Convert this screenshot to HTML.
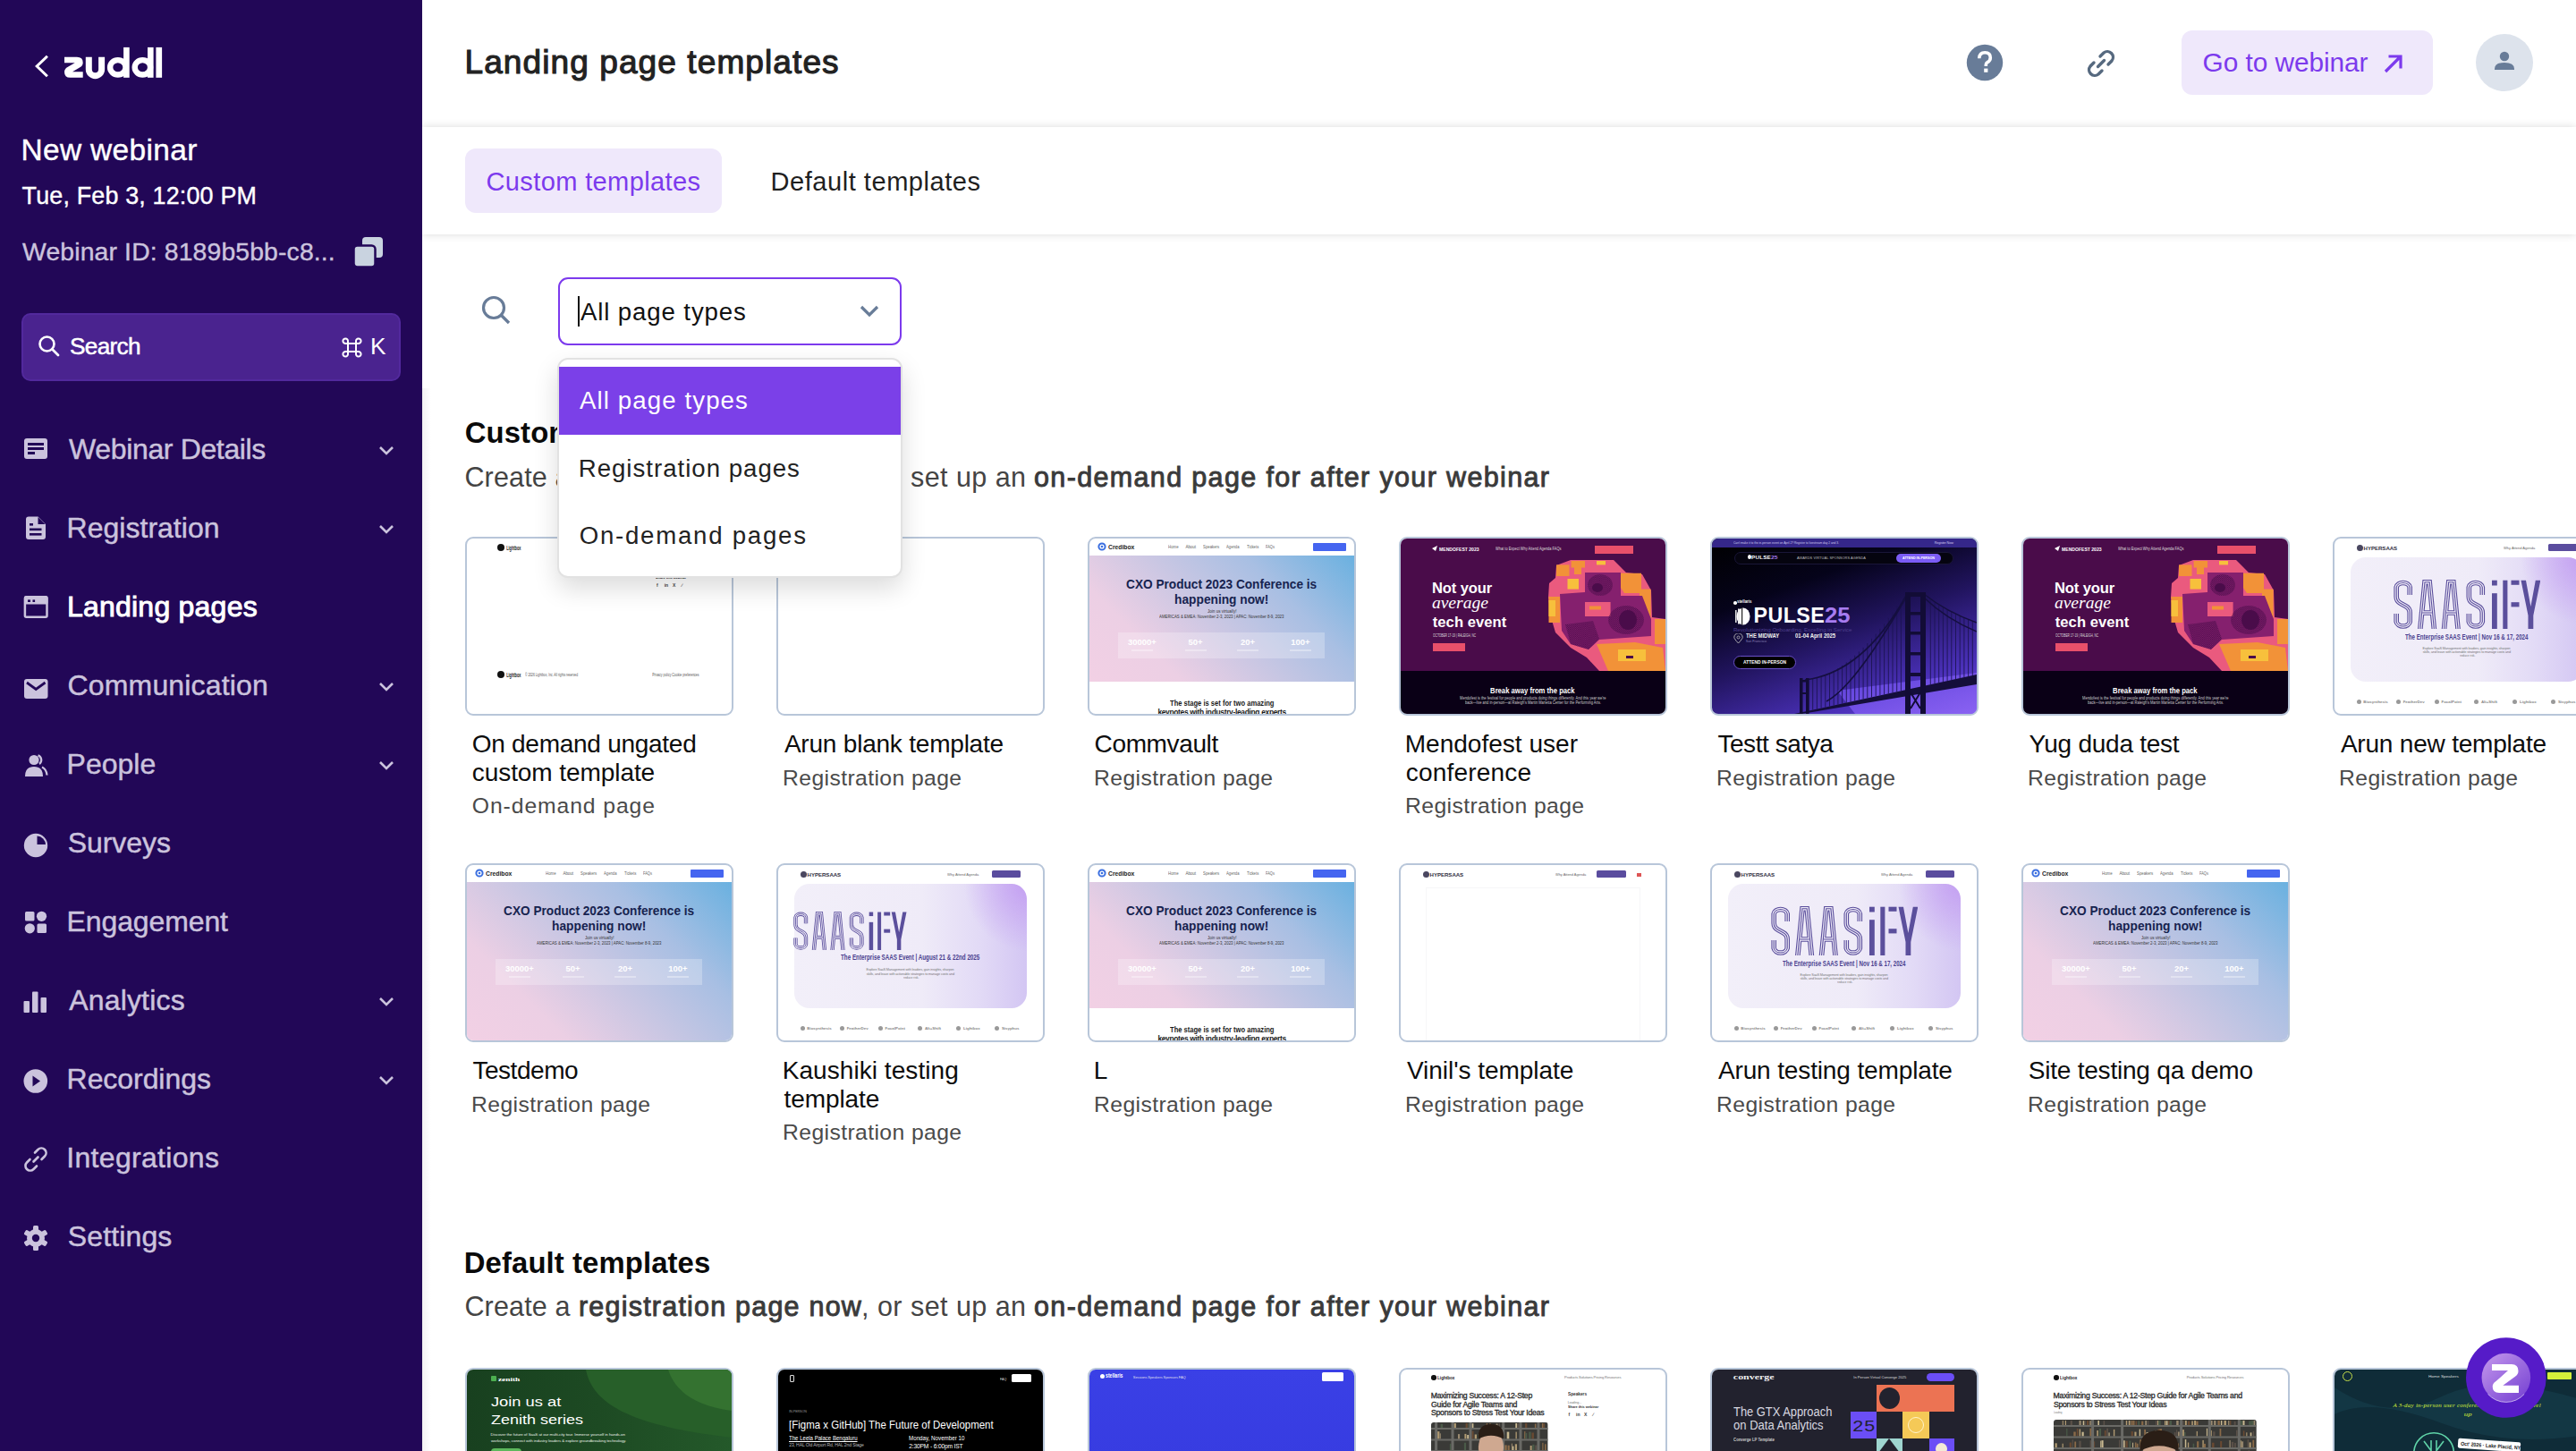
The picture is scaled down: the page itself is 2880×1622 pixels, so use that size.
<!DOCTYPE html><html><head><meta charset="utf-8"><style>
html,body{margin:0;padding:0;width:2880px;height:1622px;overflow:hidden;background:#fff;}
body{position:relative;font-family:"Liberation Sans",sans-serif;}
.a{position:absolute;box-sizing:border-box;}
.t{position:absolute;white-space:nowrap;}
.th{position:absolute;box-sizing:border-box;border:2px solid #b8c6d9;border-radius:9px;overflow:hidden;background:#fff;}
.th .a,.th .t{position:absolute;}
</style></head><body>
<div class="a" style="left:472px;top:142px;width:2408px;height:120px;background:#fff;box-shadow:0 0 9px rgba(0,0,0,0.15);"></div>
<div class="a" style="left:472px;top:434px;width:10px;height:1188px;background:linear-gradient(to right,rgba(0,0,0,0.05),rgba(0,0,0,0));"></div>
<div class="a" style="left:0px;top:0px;width:472px;height:1622px;background:#220757;"></div>
<svg class="a" style="left:36px;top:58px;" width="22" height="32" viewBox="0 0 22 32"><path d="M15.8 5.8 L5.2 16 L15.8 26.2" fill="none" stroke="#fff" stroke-width="3" stroke-linecap="square"/></svg>
<svg class="a" style="left:70px;top:50px;" width="115" height="40" viewBox="0 0 115 40"><path d="M2 13.8 H16 Q22.7 13.8 22.7 20 Q22.7 23.5 19 25.5 L11 30.3 H22.7 V36.8 H8.5 Q2 36.8 2 30.5 Q2 27 5.5 25 L13.7 20.3 H2 Z" fill="#fff"/><path d="M29.3 13.8 V27.5 A7.15 7.15 0 0 0 43.6 27.5 V13.8" fill="none" stroke="#fff" stroke-width="7"/><ellipse cx="61.8" cy="25.3" rx="8.7" ry="8.2" fill="none" stroke="#fff" stroke-width="6.4"/><rect x="68.1" y="2.9" width="6.6" height="33.9" fill="#fff"/><ellipse cx="89.4" cy="25.3" rx="8.7" ry="8.2" fill="none" stroke="#fff" stroke-width="6.4"/><rect x="95" y="2.9" width="6.6" height="33.9" fill="#fff"/><rect x="104.4" y="2.9" width="6.7" height="33.9" fill="#fff"/></svg>
<div class="t" style="left:23.5px;top:150.7px;font-size:33.43px;line-height:33.43px;letter-spacing:0.366px;color:#fff;-webkit-text-stroke:0.40px #fff;">New webinar</div>
<div class="t" style="left:24.6px;top:206.2px;font-size:26.89px;line-height:26.89px;letter-spacing:0.176px;color:#fff;-webkit-text-stroke:0.40px #fff;">Tue, Feb 3, 12:00 PM</div>
<div class="t" style="left:25.1px;top:267.0px;font-size:28.34px;line-height:28.34px;letter-spacing:0.148px;color:#cbc3dd;-webkit-text-stroke:0.40px #cbc3dd;">Webinar ID: 8189b5bb-c8...</div>
<svg class="a" style="left:394px;top:264px;" width="36" height="36" viewBox="0 0 36 36"><rect x="11" y="1" width="23" height="23" rx="4" fill="#c9d3e0"/><rect x="1.5" y="10.5" width="24" height="24" rx="4" fill="#c9d3e0" stroke="#220757" stroke-width="2.5"/></svg>
<div class="a" style="left:24px;top:350px;width:424px;height:76px;background:#4a238f;border:2px solid #52299d;border-radius:10px;"></div>
<svg class="a" style="left:42px;top:374px;" width="26" height="26" viewBox="0 0 26 26"><circle cx="10.5" cy="10.5" r="8" fill="none" stroke="#fff" stroke-width="2.6"/><path d="M16.5 16.5 L23 23" stroke="#fff" stroke-width="2.8" stroke-linecap="round"/></svg>
<div class="t" style="left:78.1px;top:373.9px;font-size:26.16px;line-height:26.16px;letter-spacing:-0.702px;color:#fff;-webkit-text-stroke:0.50px #fff;">Search</div>
<svg class="a" style="left:381px;top:376px;" width="25" height="25" viewBox="0 0 25 25"><g fill="none" stroke="#fff" stroke-width="2"><path d="M8 8 H17 V17 H8 Z"/><path d="M8 8 V5.5 A2.8 2.8 0 1 0 5.5 8 Z"/><path d="M17 8 V5.5 A2.8 2.8 0 1 1 19.5 8 Z"/><path d="M8 17 V19.5 A2.8 2.8 0 1 1 5.5 17 Z"/><path d="M17 17 V19.5 A2.8 2.8 0 1 0 19.5 17 Z"/></g></svg>
<div class="t" style="left:413.9px;top:373.9px;font-size:26.16px;line-height:26.16px;letter-spacing:-2.010px;color:#fff;">K</div>
<div class="t" style="left:77.1px;top:485.9px;font-size:31.98px;line-height:31.98px;letter-spacing:-0.346px;color:#cbc3dd;-webkit-text-stroke:0.45px #cbc3dd;">Webinar Details</div>
<svg class="a" style="left:422px;top:497px;" width="20" height="14" viewBox="0 0 20 14"><path d="M3 3 L10 10 L17 3" fill="none" stroke="#cbc3dd" stroke-width="2.6"/></svg>
<div class="t" style="left:74.6px;top:573.9px;font-size:31.98px;line-height:31.98px;letter-spacing:0.029px;color:#cbc3dd;-webkit-text-stroke:0.45px #cbc3dd;">Registration</div>
<svg class="a" style="left:422px;top:585px;" width="20" height="14" viewBox="0 0 20 14"><path d="M3 3 L10 10 L17 3" fill="none" stroke="#cbc3dd" stroke-width="2.6"/></svg>
<div class="t" style="left:74.9px;top:661.9px;font-size:31.98px;line-height:31.98px;letter-spacing:0.250px;color:#fff;-webkit-text-stroke:0.96px #fff;">Landing pages</div>
<div class="t" style="left:75.6px;top:749.9px;font-size:31.98px;line-height:31.98px;letter-spacing:0.175px;color:#cbc3dd;-webkit-text-stroke:0.45px #cbc3dd;">Communication</div>
<svg class="a" style="left:422px;top:761px;" width="20" height="14" viewBox="0 0 20 14"><path d="M3 3 L10 10 L17 3" fill="none" stroke="#cbc3dd" stroke-width="2.6"/></svg>
<div class="t" style="left:74.6px;top:837.9px;font-size:31.98px;line-height:31.98px;letter-spacing:0.005px;color:#cbc3dd;-webkit-text-stroke:0.45px #cbc3dd;">People</div>
<svg class="a" style="left:422px;top:849px;" width="20" height="14" viewBox="0 0 20 14"><path d="M3 3 L10 10 L17 3" fill="none" stroke="#cbc3dd" stroke-width="2.6"/></svg>
<div class="t" style="left:75.8px;top:925.9px;font-size:31.98px;line-height:31.98px;letter-spacing:-0.059px;color:#cbc3dd;-webkit-text-stroke:0.45px #cbc3dd;">Surveys</div>
<div class="t" style="left:74.6px;top:1013.9px;font-size:31.98px;line-height:31.98px;letter-spacing:-0.103px;color:#cbc3dd;-webkit-text-stroke:0.45px #cbc3dd;">Engagement</div>
<div class="t" style="left:77.2px;top:1101.9px;font-size:31.98px;line-height:31.98px;letter-spacing:0.189px;color:#cbc3dd;-webkit-text-stroke:0.45px #cbc3dd;">Analytics</div>
<svg class="a" style="left:422px;top:1113px;" width="20" height="14" viewBox="0 0 20 14"><path d="M3 3 L10 10 L17 3" fill="none" stroke="#cbc3dd" stroke-width="2.6"/></svg>
<div class="t" style="left:74.6px;top:1189.9px;font-size:31.98px;line-height:31.98px;letter-spacing:-0.046px;color:#cbc3dd;-webkit-text-stroke:0.45px #cbc3dd;">Recordings</div>
<svg class="a" style="left:422px;top:1201px;" width="20" height="14" viewBox="0 0 20 14"><path d="M3 3 L10 10 L17 3" fill="none" stroke="#cbc3dd" stroke-width="2.6"/></svg>
<div class="t" style="left:74.3px;top:1277.9px;font-size:31.98px;line-height:31.98px;letter-spacing:0.324px;color:#cbc3dd;-webkit-text-stroke:0.45px #cbc3dd;">Integrations</div>
<div class="t" style="left:75.8px;top:1365.9px;font-size:31.98px;line-height:31.98px;letter-spacing:0.145px;color:#cbc3dd;-webkit-text-stroke:0.45px #cbc3dd;">Settings</div>
<svg class="a" style="left:25px;top:488px;" width="30" height="30" viewBox="0 0 30 30"><rect x="2" y="2" width="26" height="23" rx="3" fill="#cbc3dd"/><rect x="6" y="7" width="18" height="3" fill="#220757"/><rect x="6" y="12" width="18" height="3" fill="#220757"/><rect x="6" y="17" width="8" height="3" fill="#220757"/></svg>
<svg class="a" style="left:25px;top:576px;" width="30" height="30" viewBox="0 0 30 30"><path d="M6 1.5 H17.5 L26 10 V24 A3 3 0 0 1 23 27 H7 A3 3 0 0 1 4 24 V4.5 A3 3 0 0 1 7 1.5 Z" fill="#cbc3dd"/><path d="M17.5 2 V10 H25.5 Z" fill="#220757"/><rect x="8" y="9" width="4" height="2.6" fill="#220757"/><rect x="8" y="14.5" width="13.5" height="2.6" fill="#220757"/><rect x="8" y="20" width="13.5" height="2.6" fill="#220757"/></svg>
<svg class="a" style="left:25px;top:666px;" width="30" height="30" viewBox="0 0 30 30"><rect x="2.9" y="1.2" width="24.6" height="22.6" rx="1.5" fill="none" stroke="#cbc3dd" stroke-width="2.5"/><rect x="2" y="0.5" width="26.5" height="9" rx="1.5" fill="#cbc3dd"/><rect x="6" y="4.4" width="3" height="2.6" fill="#220757"/><rect x="11.5" y="4.4" width="2.6" height="2.6" fill="#220757"/></svg>
<svg class="a" style="left:25px;top:755px;" width="30" height="30" viewBox="0 0 30 30"><rect x="2" y="4" width="26.5" height="22" rx="3" fill="#cbc3dd"/><path d="M5 8 L15.2 15.5 L25.5 8" fill="none" stroke="#220757" stroke-width="2.8"/></svg>
<svg class="a" style="left:26px;top:842px;" width="30" height="30" viewBox="0 0 30 30"><circle cx="12" cy="7.5" r="5.6" fill="#cbc3dd"/><path d="M2 26 Q2 15 12 15 Q22 15 22 26 Z" fill="#cbc3dd"/><path d="M16.5 2.3 A5.6 5.6 0 0 1 18 12" fill="none" stroke="#cbc3dd" stroke-width="2.3"/><path d="M21 15.5 Q26 18 26.5 24.5" fill="none" stroke="#cbc3dd" stroke-width="2.3"/></svg>
<svg class="a" style="left:25px;top:930px;" width="30" height="30" viewBox="0 0 30 30"><circle cx="15" cy="15" r="13.2" fill="#cbc3dd"/><path d="M16.5 4.5 A10 10 0 0 1 26 14 H16.5 Z" fill="#220757"/></svg>
<svg class="a" style="left:25px;top:1017px;" width="30" height="30" viewBox="0 0 30 30"><rect x="3" y="2" width="10.5" height="10.5" rx="1.5" fill="#cbc3dd"/><circle cx="21.5" cy="7.3" r="5.6" fill="#cbc3dd"/><circle cx="8.3" cy="20.8" r="5.6" fill="#cbc3dd"/><rect x="16.5" y="15.5" width="10.5" height="10.5" rx="1.5" fill="#cbc3dd"/></svg>
<svg class="a" style="left:25px;top:1107px;" width="30" height="30" viewBox="0 0 30 30"><rect x="1.5" y="12" width="6.5" height="13" rx="1" fill="#cbc3dd"/><rect x="11" y="1.5" width="6.5" height="23.5" rx="1" fill="#cbc3dd"/><rect x="20.5" y="8" width="6.5" height="17" rx="1" fill="#cbc3dd"/></svg>
<svg class="a" style="left:25px;top:1194px;" width="30" height="30" viewBox="0 0 30 30"><circle cx="14.8" cy="14.5" r="13.3" fill="#cbc3dd"/><path d="M11.5 8.5 L20 14.5 L11.5 20.5 Z" fill="#220757"/></svg>
<svg class="a" style="left:25px;top:1281px;" width="30" height="30" viewBox="0 0 30 30"><path d="M12.5 17.5 L17.5 12.5" stroke="#cbc3dd" stroke-width="2.6" stroke-linecap="round"/><path d="M14 7.5 L17.5 4 A5.3 5.3 0 0 1 25 11.5 L21.5 15" fill="none" stroke="#cbc3dd" stroke-width="2.6" stroke-linecap="round"/><path d="M16 22.5 L12.5 26 A5.3 5.3 0 0 1 5 18.5 L8.5 15" fill="none" stroke="#cbc3dd" stroke-width="2.6" stroke-linecap="round"/></svg>
<svg class="a" style="left:25px;top:1369px;" width="30" height="30" viewBox="0 0 30 30"><rect x="12" y="1" width="6" height="8" rx="1.5" fill="#cbc3dd" transform="rotate(0 15 15)"/><rect x="12" y="1" width="6" height="8" rx="1.5" fill="#cbc3dd" transform="rotate(60 15 15)"/><rect x="12" y="1" width="6" height="8" rx="1.5" fill="#cbc3dd" transform="rotate(120 15 15)"/><rect x="12" y="1" width="6" height="8" rx="1.5" fill="#cbc3dd" transform="rotate(180 15 15)"/><rect x="12" y="1" width="6" height="8" rx="1.5" fill="#cbc3dd" transform="rotate(240 15 15)"/><rect x="12" y="1" width="6" height="8" rx="1.5" fill="#cbc3dd" transform="rotate(300 15 15)"/><circle cx="15" cy="15" r="10" fill="#cbc3dd"/><circle cx="15" cy="15" r="4.2" fill="#220757"/></svg>
<div class="t" style="left:519.5px;top:50.6px;font-size:37.06px;line-height:37.06px;letter-spacing:1.077px;color:#222;-webkit-text-stroke:1.11px #222;">Landing page templates</div>
<svg class="a" style="left:2198px;top:49px;" width="42" height="42" viewBox="0 0 42 42"><circle cx="21" cy="21" r="20.2" fill="#687c98"/><path d="M14.8 16.2 Q15 9.8 21.2 9.8 Q27.3 9.8 27.3 15.5 Q27.3 19 23.6 20.8 Q22.3 21.5 22.3 23.5 V25" fill="none" stroke="#fff" stroke-width="3.6"/><rect x="20.2" y="27.6" width="4.2" height="4.2" fill="#fff"/></svg>
<svg class="a" style="left:2328px;top:50px;" width="42" height="42" viewBox="0 0 42 42"><g fill="none" stroke="#56697f" stroke-width="3.4" stroke-linecap="round"><path d="M17.5 24.5 L24.5 17.5"/><path d="M20 13 L24 9 A6.4 6.4 0 0 1 33 18 L29 22"/><path d="M22 29 L18 33 A6.4 6.4 0 0 1 9 24 L13 20"/></g></svg>
<div class="a" style="left:2439px;top:34px;width:281px;height:72px;background:#efe8fb;border-radius:12px;"></div>
<div class="t" style="left:2462.5px;top:54.8px;font-size:29.80px;line-height:29.80px;letter-spacing:-0.042px;color:#7c3aed;">Go to webinar</div>
<svg class="a" style="left:2662px;top:58px;" width="28" height="26" viewBox="0 0 28 26"><path d="M5 22 L22 5 M8.5 5 H22 V18.5" fill="none" stroke="#7c3aed" stroke-width="3.2"/></svg>
<div class="a" style="left:2768px;top:38px;width:64px;height:64px;background:#dde3ec;border-radius:50%;"></div>
<svg class="a" style="left:2782px;top:52px;" width="36" height="36" viewBox="0 0 36 36"><circle cx="18" cy="11" r="5.2" fill="#687c98"/><path d="M7 25 Q7 18 18 18 Q29 18 29 25 V26 H7 Z" fill="#687c98"/></svg>
<div class="a" style="left:520px;top:166px;width:287px;height:72px;background:#efe8fb;border-radius:12px;"></div>
<div class="t" style="left:543.5px;top:189.4px;font-size:29.07px;line-height:29.07px;letter-spacing:0.351px;color:#7c3aed;">Custom templates</div>
<div class="t" style="left:861.6px;top:189.4px;font-size:29.07px;line-height:29.07px;letter-spacing:0.514px;color:#1f1f1f;">Default templates</div>
<svg class="a" style="left:536px;top:328px;" width="38" height="38" viewBox="0 0 38 38"><circle cx="16" cy="16" r="11.5" fill="none" stroke="#687c98" stroke-width="3.2"/><path d="M24.5 24.5 L33 33" stroke="#687c98" stroke-width="3.4"/></svg>
<div class="a" style="left:624px;top:310px;width:384px;height:76px;border:2px solid #7c3aed;border-radius:11px;background:#fff;"></div>
<div class="a" style="left:646px;top:331px;width:2px;height:34px;background:#111;"></div>
<div class="t" style="left:648.9px;top:334.6px;font-size:27.62px;line-height:27.62px;letter-spacing:0.890px;color:#111;">All page types</div>
<svg class="a" style="left:958px;top:338px;" width="28" height="22" viewBox="0 0 28 22"><path d="M5 5 L14 14 L23 5" fill="none" stroke="#687c98" stroke-width="3.2"/></svg>
<div class="t" style="left:519.7px;top:468.2px;font-size:32.85px;line-height:32.85px;letter-spacing:0.123px;color:#0a0a0a;font-weight:700;">Custom templates</div>
<div class="t" style="left:519.4px;top:517.7px;font-size:30.52px;line-height:30.52px;letter-spacing:0.154px;color:#444;">Create a</div>
<div class="t" style="left:647.0px;top:517.7px;font-size:30.52px;line-height:30.52px;letter-spacing:1.204px;color:#3a3a3a;-webkit-text-stroke:0.92px #3a3a3a;">registration page now</div>
<div class="t" style="left:963.1px;top:517.7px;font-size:30.52px;line-height:30.52px;letter-spacing:0.451px;color:#444;">, or set up an</div>
<div class="t" style="left:1156.0px;top:517.7px;font-size:30.52px;line-height:30.52px;letter-spacing:1.344px;color:#3a3a3a;-webkit-text-stroke:0.92px #3a3a3a;">on-demand page for after your webinar</div>
<div class="t" style="left:518.8px;top:1396.2px;font-size:32.85px;line-height:32.85px;letter-spacing:0.108px;color:#0a0a0a;font-weight:700;">Default templates</div>
<div class="t" style="left:519.4px;top:1444.7px;font-size:30.52px;line-height:30.52px;letter-spacing:0.154px;color:#444;">Create a</div>
<div class="t" style="left:647.0px;top:1444.7px;font-size:30.52px;line-height:30.52px;letter-spacing:1.204px;color:#3a3a3a;-webkit-text-stroke:0.92px #3a3a3a;">registration page now</div>
<div class="t" style="left:963.1px;top:1444.7px;font-size:30.52px;line-height:30.52px;letter-spacing:0.451px;color:#444;">, or set up an</div>
<div class="t" style="left:1156.0px;top:1444.7px;font-size:30.52px;line-height:30.52px;letter-spacing:1.344px;color:#3a3a3a;-webkit-text-stroke:0.92px #3a3a3a;">on-demand page for after your webinar</div>
<div class="th" style="left:520px;top:600px;width:300px;height:200px;border-color:#b8c6d9;"><div class="a" style="left:34px;top:6px;width:8px;height:8px;background:#111;border-radius:50%;"></div><div class="t" style="left:43.6px;top:7.5px;font-size:6.54px;line-height:6.54px;letter-spacing:0.000px;color:#222;font-weight:700;transform:scaleX(0.5899);transform-origin:0.44px 0;">Lightbox</div><div class="t" style="left:210.8px;top:41.1px;font-size:5.81px;line-height:5.81px;letter-spacing:0.000px;color:#222;font-weight:700;transform:scaleX(0.6610);transform-origin:0.17px 0;">Share this webinar</div><div class="t" style="left:211.9px;top:50.3px;font-size:5.00px;line-height:5.00px;letter-spacing:0.000px;color:#444;font-weight:700;">f</div><div class="t" style="left:220.7px;top:50.3px;font-size:5.00px;line-height:5.00px;letter-spacing:0.000px;color:#444;font-weight:700;">in</div><div class="t" style="left:230.0px;top:50.3px;font-size:5.00px;line-height:5.00px;letter-spacing:0.000px;color:#444;font-weight:700;">X</div><div class="t" style="left:239.9px;top:50.3px;font-size:5.00px;line-height:5.00px;letter-spacing:0.000px;color:#444;font-weight:700;">∕</div><div class="a" style="left:34px;top:148px;width:8px;height:8px;background:#111;border-radius:50%;"></div><div class="t" style="left:43.6px;top:149.5px;font-size:6.54px;line-height:6.54px;letter-spacing:0.000px;color:#222;font-weight:700;transform:scaleX(0.5899);transform-origin:0.44px 0;">Lightbox</div><div class="t" style="left:64.9px;top:149.7px;font-size:5.09px;line-height:5.09px;letter-spacing:0.000px;color:#555;transform:scaleX(0.6565);transform-origin:0.08px 0;">© 2026 Lightbox, Inc. All rights reserved</div><div class="t" style="left:206.6px;top:149.7px;font-size:5.09px;line-height:5.09px;letter-spacing:0.000px;color:#555;transform:scaleX(0.6849);transform-origin:0.42px 0;">Privacy policy   Cookie preferences</div></div>
<div class="t" style="left:527.7px;top:818.3px;font-size:28.05px;line-height:28.05px;letter-spacing:-0.291px;color:#0d0d0d;">On demand ungated</div>
<div class="t" style="left:527.8px;top:849.9px;font-size:28.05px;line-height:28.05px;letter-spacing:-0.098px;color:#0d0d0d;">custom template</div>
<div class="t" style="left:527.8px;top:889.3px;font-size:24.71px;line-height:24.71px;letter-spacing:0.919px;color:#4a4a4a;">On-demand page</div>
<div class="th" style="left:868px;top:600px;width:300px;height:200px;border-color:#b8c6d9;"></div>
<div class="t" style="left:876.9px;top:818.3px;font-size:28.05px;line-height:28.05px;letter-spacing:-0.233px;color:#0d0d0d;">Arun blank template</div>
<div class="t" style="left:875.0px;top:857.7px;font-size:24.71px;line-height:24.71px;letter-spacing:0.403px;color:#4a4a4a;">Registration page</div>
<div class="th" style="left:1216px;top:600px;width:300px;height:200px;border-color:#b8c6d9;"><div class="a" style="left:0px;top:18.5px;width:296px;height:141px;background:linear-gradient(45deg,#f2d0e4 0%,#eccfe4 24%,#cbc7e3 47%,#a8bfe3 72%,#6ab1e0 100%);"></div><svg class="a" style="left:9px;top:4px" width="10" height="10" viewBox="0 0 10 10"><circle cx="5" cy="5" r="3.6" fill="none" stroke="#3b6fe0" stroke-width="2"/><circle cx="5" cy="5" r="1.3" fill="#3b6fe0"/></svg><div class="t" style="left:20.7px;top:5.7px;font-size:7.99px;line-height:7.99px;letter-spacing:0.000px;color:#222;font-weight:700;transform:scaleX(0.8465);transform-origin:0.33px 0;">Credibox</div><div class="t" style="left:88.1px;top:8.4px;font-size:4.65px;line-height:4.65px;letter-spacing:0.000px;color:#666;transform:scaleX(0.9307);transform-origin:0.38px 0;">Home</div><div class="t" style="left:107.5px;top:8.4px;font-size:4.65px;line-height:4.65px;letter-spacing:-0.153px;color:#666;">About</div><div class="t" style="left:126.6px;top:8.4px;font-size:4.65px;line-height:4.65px;letter-spacing:0.000px;color:#666;transform:scaleX(0.9237);transform-origin:0.21px 0;">Speakers</div><div class="t" style="left:152.9px;top:8.4px;font-size:4.65px;line-height:4.65px;letter-spacing:0.000px;color:#666;transform:scaleX(0.9047);transform-origin:0.01px 0;">Agenda</div><div class="t" style="left:175.7px;top:8.4px;font-size:4.65px;line-height:4.65px;letter-spacing:0.000px;color:#666;transform:scaleX(0.9130);transform-origin:0.10px 0;">Tickets</div><div class="t" style="left:196.9px;top:8.4px;font-size:4.65px;line-height:4.65px;letter-spacing:0.000px;color:#666;transform:scaleX(0.8468);transform-origin:0.38px 0;">FAQs</div><div class="a" style="left:250px;top:5px;width:37px;height:9px;background:#4565f0;border-radius:1px;"></div><div class="t" style="left:40.9px;top:44.3px;font-size:14.97px;line-height:14.97px;letter-spacing:0.000px;color:#17234f;font-weight:700;transform:scaleX(0.9116);transform-origin:0.61px 0;">CXO Product 2023 Conference is</div><div class="t" style="left:95.0px;top:61.3px;font-size:14.97px;line-height:14.97px;letter-spacing:0.000px;color:#17234f;font-weight:700;transform:scaleX(0.9173);transform-origin:1.05px 0;">happening now!</div><div class="t" style="left:131.9px;top:78.7px;font-size:5.09px;line-height:5.09px;letter-spacing:0.000px;color:#333;transform:scaleX(0.8977);transform-origin:0.08px 0;">Join us virtually!</div><div class="t" style="left:78.0px;top:85.2px;font-size:5.09px;line-height:5.09px;letter-spacing:0.000px;color:#333;transform:scaleX(0.8569);transform-origin:0.01px 0;">AMERICAS &amp; EMEA: November 2-3, 2023 | APAC: November 8-9, 2023</div><div class="a" style="left:32px;top:105px;width:231px;height:29px;background:rgba(255,255,255,0.25);"></div><div class="t" style="left:43.1px;top:111.0px;font-size:9.45px;line-height:9.45px;letter-spacing:0.000px;color:#fff;font-weight:700;">30000+</div><div class="a" style="left:47px;top:124px;width:24px;height:2px;background:rgba(255,255,255,0.35);"></div><div class="t" style="left:110.5px;top:111.0px;font-size:9.45px;line-height:9.45px;letter-spacing:0.000px;color:#fff;font-weight:700;">50+</div><div class="a" style="left:106.5px;top:124px;width:24px;height:2px;background:rgba(255,255,255,0.35);"></div><div class="t" style="left:169.0px;top:111.0px;font-size:9.45px;line-height:9.45px;letter-spacing:0.000px;color:#fff;font-weight:700;">20+</div><div class="a" style="left:165px;top:124px;width:24px;height:2px;background:rgba(255,255,255,0.35);"></div><div class="t" style="left:225.2px;top:111.0px;font-size:9.45px;line-height:9.45px;letter-spacing:0.000px;color:#fff;font-weight:700;">100+</div><div class="a" style="left:224px;top:124px;width:24px;height:2px;background:rgba(255,255,255,0.35);"></div><div class="t" style="left:89.9px;top:179.9px;font-size:8.43px;line-height:8.43px;letter-spacing:0.000px;color:#1a1a1a;font-weight:700;transform:scaleX(0.8985);transform-origin:0.09px 0;">The stage is set for two amazing</div><div class="t" style="left:76.4px;top:189.9px;font-size:8.43px;line-height:8.43px;letter-spacing:-0.326px;color:#1a1a1a;font-weight:700;">keynotes with industry-leading experts</div></div>
<div class="t" style="left:1223.6px;top:818.3px;font-size:28.05px;line-height:28.05px;letter-spacing:-0.403px;color:#0d0d0d;">Commvault</div>
<div class="t" style="left:1223.0px;top:857.7px;font-size:24.71px;line-height:24.71px;letter-spacing:0.403px;color:#4a4a4a;">Registration page</div>
<div class="th" style="left:1564px;top:600px;width:300px;height:200px;border-color:#b8c6d9;"><div class="a" style="left:0px;top:0px;width:296px;height:148px;background:#4a0c4a;"></div><div class="a" style="left:0px;top:148px;width:296px;height:48px;background:#0a0016;"></div><svg class="a" style="left:0px;top:0px" width="296" height="148" viewBox="0 0 296 148"><defs><pattern id="chk" width="2.2" height="2.2" patternUnits="userSpaceOnUse"><rect width="1.1" height="1.1" fill="#4a0c4a"/><rect x="1.1" y="1.1" width="1.1" height="1.1" fill="#4a0c4a"/></pattern></defs><path d="M190 24 L238 24 L246 32 L252 38 L270 40 L280 58 L281 88 L296 90 L296 148 L222 148 L208 133 L190 122 L173 105 L168 88 L165 66 L166 50 L173 44 L174 30 Z" fill="#ea5a7e"/><rect x="174" y="29.4" width="14.5" height="12.6" fill="#f29238"/><rect x="190.6" y="25" width="15.4" height="7.5" fill="#f29238"/><rect x="194" y="32" width="8" height="8" fill="#f29238"/><path d="M243 38.8 L269 38.8 L269 61 L250 61 L244 52 Z" fill="#f29238"/><rect x="165.5" y="65" width="12.5" height="29" fill="#f29238"/><rect x="267" y="56.6" width="12.6" height="33.4" fill="#f29238"/><path d="M219 118 L262 116 L293 122 L296 148 L232 148 Z" fill="#f29238"/><rect x="284" y="90" width="12" height="28" fill="#f29238"/><rect x="186.5" y="45" width="12.5" height="11.6" fill="#f7c03c"/><rect x="165.5" y="69" width="7.5" height="18" fill="#f7c03c"/><rect x="243" y="124" width="31" height="13" fill="#f7c03c"/><rect x="219" y="25" width="10" height="4.4" fill="#f7c03c"/><rect x="252" y="131" width="8" height="3" fill="#4a0c4a"/><path d="M178 62 L206 60 L206 38 L246 38 L246 64 L270 64 L280 90 L280 109 L222 113 L210 124 L190 118 L180 103 Z" fill="#85206e"/><rect x="206" y="71" width="28.6" height="16" fill="#ea5a7e"/><rect x="211" y="75.5" width="13" height="4" fill="#f29238"/><ellipse cx="223" cy="52" rx="14" ry="12" fill="url(#chk)"/><ellipse cx="220" cy="55" rx="6" ry="5" fill="#4a0c4a"/><ellipse cx="252" cy="91" rx="20" ry="16" fill="url(#chk)"/><ellipse cx="254" cy="91" rx="10" ry="11" fill="#4a0c4a"/><path d="M184 96 L215 92 L222 112 L210 124 L190 118 Z" fill="url(#chk)"/></svg><svg class="a" style="left:35px;top:8px" width="6" height="6" viewBox="0 0 6 6"><path d="M0 3 L6 0 L4 6 Z" fill="#fff"/></svg><div class="t" style="left:42.6px;top:8.8px;font-size:6.10px;line-height:6.10px;letter-spacing:0.000px;color:#fff;font-weight:700;transform:scaleX(0.8306);transform-origin:0.41px 0;">MENDOFEST 2023</div><div class="t" style="left:106.0px;top:10.1px;font-size:4.65px;line-height:4.65px;letter-spacing:0.000px;color:#ddd;transform:scaleX(0.8500);transform-origin:0.02px 0;">What to Expect    Why Attend    Agenda    FAQs</div><div class="a" style="left:217px;top:8px;width:43px;height:8.5px;background:#e8506a;"></div><div class="t" style="left:34.9px;top:48.0px;font-size:16.57px;line-height:16.57px;letter-spacing:-0.108px;color:#fff;font-weight:700;">Not your</div><div class="t" style="left:34.9px;top:62.4px;font-size:19.57px;line-height:19.57px;letter-spacing:0.000px;color:#fff;font-family:'Liberation Serif',serif;font-style:italic;">average</div><div class="t" style="left:35.8px;top:86.0px;font-size:16.57px;line-height:16.57px;letter-spacing:0.050px;color:#fff;font-weight:700;">tech event</div><div class="t" style="left:35.8px;top:107.1px;font-size:4.65px;line-height:4.65px;letter-spacing:0.000px;color:#ddd;transform:scaleX(0.6926);transform-origin:0.22px 0;">OCTOBER 17-19 | RALEIGH, NC</div><div class="a" style="left:36px;top:117px;width:36px;height:9px;background:#e8506a;"></div><div class="t" style="left:100.4px;top:166.2px;font-size:9.16px;line-height:9.16px;letter-spacing:0.000px;color:#fff;font-weight:700;transform:scaleX(0.8364);transform-origin:0.61px 0;">Break away from the pack</div><div class="t" style="left:65.6px;top:177.1px;font-size:4.65px;line-height:4.65px;letter-spacing:0.000px;color:#ccc;transform:scaleX(0.8664);transform-origin:0.38px 0;">Mendofest is the festival for people and products doing things differently. And this year we&#x27;re</div><div class="t" style="left:71.7px;top:182.1px;font-size:4.65px;line-height:4.65px;letter-spacing:0.000px;color:#ccc;transform:scaleX(0.8626);transform-origin:0.30px 0;">back—live and in-person—at Raleigh&#x27;s Martin Marietta Center for the Performing Arts.</div></div>
<div class="t" style="left:1570.7px;top:818.3px;font-size:28.05px;line-height:28.05px;letter-spacing:0.001px;color:#0d0d0d;">Mendofest user</div>
<div class="t" style="left:1571.8px;top:849.9px;font-size:28.05px;line-height:28.05px;letter-spacing:0.160px;color:#0d0d0d;">conference</div>
<div class="t" style="left:1571.0px;top:889.3px;font-size:24.71px;line-height:24.71px;letter-spacing:0.403px;color:#4a4a4a;">Registration page</div>
<div class="th" style="left:1912px;top:600px;width:300px;height:200px;border-color:#b8c6d9;"><div class="a" style="left:0px;top:0px;width:296px;height:196px;background:linear-gradient(160deg,#000 0%,#05031a 28%,#21145e 52%,#4a30b8 80%,#7450ea 100%);"></div><svg class="a" style="left:0px;top:0px" width="296" height="196" viewBox="0 0 296 196"><defs><linearGradient id="pbg" x1="0" y1="0" x2="1" y2="1"><stop offset="0" stop-color="#5a3fd8"/><stop offset="1" stop-color="#8a62f2"/></linearGradient></defs><path d="M140 170 L296 150 L296 196 L160 196 Z" fill="url(#pbg)"/><g fill="none" stroke="#1c1452" stroke-width="0.9"><path d="M108.0 157.8 V192.5"/><path d="M112.7 157.0 V191.5"/><path d="M117.4 155.9 V190.5"/><path d="M122.1 154.4 V189.5"/><path d="M126.8 152.5 V188.5"/><path d="M131.5 150.3 V187.5"/><path d="M136.2 147.8 V186.5"/><path d="M140.9 145.0 V185.5"/><path d="M145.6 141.9 V184.4"/><path d="M150.3 138.4 V183.4"/><path d="M155.0 134.7 V182.4"/><path d="M159.7 130.7 V181.4"/><path d="M164.4 126.4 V180.4"/><path d="M169.1 121.8 V179.4"/><path d="M173.8 117.0 V178.4"/><path d="M178.5 111.9 V177.3"/><path d="M183.2 106.6 V176.3"/><path d="M187.9 100.9 V175.3"/><path d="M192.6 95.0 V174.3"/><path d="M197.3 88.9 V173.3"/><path d="M202.0 82.5 V172.3"/><path d="M206.7 75.9 V171.3"/><path d="M211.4 69.0 V170.2"/><path d="M244.3 68.1 V163.2"/><path d="M249.0 71.5 V162.1"/><path d="M253.7 74.4 V161.1"/><path d="M258.4 77.0 V160.1"/><path d="M263.1 79.5 V159.1"/><path d="M267.8 81.8 V158.1"/><path d="M272.5 84.1 V157.1"/><path d="M277.2 86.2 V156.1"/><path d="M281.9 88.2 V155.0"/><path d="M286.6 90.2 V154.0"/><path d="M291.3 92.1 V153.0"/></g><g fill="none" stroke="#150f40" stroke-width="1.6"><path d="M218 62 Q170 150 104 158"/><path d="M218 64 Q160 165 128 182"/><path d="M237 62 Q262 82 296 94"/><path d="M237 66 Q262 90 296 104"/></g><path d="M92 196 L296 152 L296 163 L100 196 Z" fill="#140e3a"/><g fill="#120c36"><rect x="216" y="60" width="6" height="136"/><rect x="233" y="60" width="6" height="136"/><rect x="216" y="60" width="23" height="5"/><rect x="216" y="82" width="23" height="3.5"/><rect x="216" y="104" width="23" height="3.5"/><rect x="216" y="127" width="23" height="3.5"/><rect x="216" y="150" width="23" height="4"/><path d="M222 172 L233 190 M233 172 L222 190" stroke="#120c36" stroke-width="2"/><rect x="98" y="156" width="3.5" height="40"/><rect x="105" y="156" width="3.5" height="40"/><rect x="98" y="158" width="10" height="2.5"/><rect x="98" y="172" width="10" height="2"/></g></svg><div class="a" style="left:0px;top:0px;width:296px;height:10px;background:#35278a;"></div><div class="t" style="left:23.8px;top:3.8px;font-size:3.78px;line-height:3.78px;letter-spacing:0.000px;color:#cfc8ee;transform:scaleX(0.8578);transform-origin:0.19px 0;">Can&#x27;t make it to the in-person event on April 2? Register to livestream day 2 and 3.</div><div class="t" style="left:248.7px;top:3.8px;font-size:3.78px;line-height:3.78px;letter-spacing:-0.126px;color:#cfc8ee;">Register Now</div><div class="a" style="left:25px;top:14.7px;width:245px;height:14.5px;background:#05040f;border-radius:7px;border:1px solid #1a1638;"></div><div class="a" style="left:40px;top:18px;width:4px;height:5px;background:#fff;border-radius:50%;"></div><div class="t" style="left:44.1px;top:18.2px;font-size:6.25px;line-height:6.25px;letter-spacing:0.206px;color:#fff;font-weight:700;">PULSE</div><div class="t" style="left:65.8px;top:18.2px;font-size:6.25px;line-height:6.25px;letter-spacing:0.000px;color:#a77cf0;font-weight:700;transform:scaleX(1.0669);transform-origin:0.22px 0;">25</div><div class="t" style="left:95.0px;top:19.7px;font-size:3.92px;line-height:3.92px;letter-spacing:0.074px;color:#bbb;">AWARDS     VIRTUAL     SPONSORS     AGENDA</div><div class="a" style="left:206px;top:17px;width:50px;height:9.5px;background:#7b5cf5;border-radius:5px;"></div><div class="t" style="left:212.9px;top:20.0px;font-size:3.92px;line-height:3.92px;letter-spacing:0.000px;color:#fff;font-weight:700;transform:scaleX(0.9364);transform-origin:0.10px 0;">ATTEND IN-PERSON</div><div class="a" style="left:24px;top:70px;width:3.5px;height:3.5px;background:#fff;border-radius:50%;"></div><div class="t" style="left:28.3px;top:69.3px;font-size:4.94px;line-height:4.94px;letter-spacing:0.000px;color:#fff;font-weight:700;transform:scaleX(0.8741);transform-origin:0.17px 0;">stellaris</div><svg class="a" style="left:24px;top:77px" width="20" height="20" viewBox="0 0 20 20"><ellipse cx="11" cy="10" rx="7.5" ry="9.5" fill="#fff"/><rect x="2" y="3" width="1.6" height="14" fill="#ddd"/><rect x="5" y="1.5" width="2" height="17" fill="#eee"/><rect x="9" y="0.5" width="1.2" height="19" fill="#222"/></svg><div class="t" style="left:46.4px;top:75.3px;font-size:23.26px;line-height:23.26px;letter-spacing:0.482px;color:#fff;font-weight:700;">PULSE</div><div class="t" style="left:126.2px;top:75.3px;font-size:23.26px;line-height:23.26px;letter-spacing:0.000px;color:#a77cf0;font-weight:700;transform:scaleX(1.1059);transform-origin:0.81px 0;">25</div><div class="t" style="left:23.6px;top:100.1px;font-size:5.23px;line-height:5.23px;letter-spacing:0.000px;color:#4d3f8e;transform:scaleX(1.1796);transform-origin:0.43px 0;">Revolutionizing Onboarding, Excelling in Service</div><svg class="a" style="left:24px;top:106px" width="11" height="12" viewBox="0 0 11 12"><path d="M5.5 11 Q0.8 6 0.8 4.5 A4.7 4.7 0 0 1 10.2 4.5 Q10.2 6 5.5 11 Z" fill="none" stroke="#bbb" stroke-width="0.9"/><circle cx="5.5" cy="4.5" r="1.5" fill="none" stroke="#bbb" stroke-width="0.8"/></svg><div class="t" style="left:37.9px;top:106.2px;font-size:6.54px;line-height:6.54px;letter-spacing:0.000px;color:#eee;font-weight:700;transform:scaleX(0.9054);transform-origin:0.07px 0;">THE MIDWAY</div><div class="t" style="left:92.7px;top:106.2px;font-size:6.54px;line-height:6.54px;letter-spacing:0.000px;color:#eee;font-weight:700;transform:scaleX(0.9115);transform-origin:0.26px 0;">01-04 April 2025</div><div class="t" style="left:37.8px;top:113.9px;font-size:3.63px;line-height:3.63px;letter-spacing:0.008px;color:#8a80b8;">San Francisco</div><div class="a" style="left:24.3px;top:130.5px;width:70.2px;height:15.2px;background:#000;border:1.2px solid #6a50c8;border-radius:8px;"></div><div class="t" style="left:35.4px;top:136.1px;font-size:5.23px;line-height:5.23px;letter-spacing:0.000px;color:#fff;font-weight:700;transform:scaleX(0.9364);transform-origin:0.13px 0;">ATTEND IN-PERSON</div></div>
<div class="t" style="left:1920.4px;top:818.3px;font-size:28.05px;line-height:28.05px;letter-spacing:-0.456px;color:#0d0d0d;">Testt satya</div>
<div class="t" style="left:1919.0px;top:857.7px;font-size:24.71px;line-height:24.71px;letter-spacing:0.403px;color:#4a4a4a;">Registration page</div>
<div class="th" style="left:2260px;top:600px;width:300px;height:200px;border-color:#b8c6d9;"><div class="a" style="left:0px;top:0px;width:296px;height:148px;background:#4a0c4a;"></div><div class="a" style="left:0px;top:148px;width:296px;height:48px;background:#0a0016;"></div><svg class="a" style="left:0px;top:0px" width="296" height="148" viewBox="0 0 296 148"><defs><pattern id="chk" width="2.2" height="2.2" patternUnits="userSpaceOnUse"><rect width="1.1" height="1.1" fill="#4a0c4a"/><rect x="1.1" y="1.1" width="1.1" height="1.1" fill="#4a0c4a"/></pattern></defs><path d="M190 24 L238 24 L246 32 L252 38 L270 40 L280 58 L281 88 L296 90 L296 148 L222 148 L208 133 L190 122 L173 105 L168 88 L165 66 L166 50 L173 44 L174 30 Z" fill="#ea5a7e"/><rect x="174" y="29.4" width="14.5" height="12.6" fill="#f29238"/><rect x="190.6" y="25" width="15.4" height="7.5" fill="#f29238"/><rect x="194" y="32" width="8" height="8" fill="#f29238"/><path d="M243 38.8 L269 38.8 L269 61 L250 61 L244 52 Z" fill="#f29238"/><rect x="165.5" y="65" width="12.5" height="29" fill="#f29238"/><rect x="267" y="56.6" width="12.6" height="33.4" fill="#f29238"/><path d="M219 118 L262 116 L293 122 L296 148 L232 148 Z" fill="#f29238"/><rect x="284" y="90" width="12" height="28" fill="#f29238"/><rect x="186.5" y="45" width="12.5" height="11.6" fill="#f7c03c"/><rect x="165.5" y="69" width="7.5" height="18" fill="#f7c03c"/><rect x="243" y="124" width="31" height="13" fill="#f7c03c"/><rect x="219" y="25" width="10" height="4.4" fill="#f7c03c"/><rect x="252" y="131" width="8" height="3" fill="#4a0c4a"/><path d="M178 62 L206 60 L206 38 L246 38 L246 64 L270 64 L280 90 L280 109 L222 113 L210 124 L190 118 L180 103 Z" fill="#85206e"/><rect x="206" y="71" width="28.6" height="16" fill="#ea5a7e"/><rect x="211" y="75.5" width="13" height="4" fill="#f29238"/><ellipse cx="223" cy="52" rx="14" ry="12" fill="url(#chk)"/><ellipse cx="220" cy="55" rx="6" ry="5" fill="#4a0c4a"/><ellipse cx="252" cy="91" rx="20" ry="16" fill="url(#chk)"/><ellipse cx="254" cy="91" rx="10" ry="11" fill="#4a0c4a"/><path d="M184 96 L215 92 L222 112 L210 124 L190 118 Z" fill="url(#chk)"/></svg><svg class="a" style="left:35px;top:8px" width="6" height="6" viewBox="0 0 6 6"><path d="M0 3 L6 0 L4 6 Z" fill="#fff"/></svg><div class="t" style="left:42.6px;top:8.8px;font-size:6.10px;line-height:6.10px;letter-spacing:0.000px;color:#fff;font-weight:700;transform:scaleX(0.8306);transform-origin:0.41px 0;">MENDOFEST 2023</div><div class="t" style="left:106.0px;top:10.1px;font-size:4.65px;line-height:4.65px;letter-spacing:0.000px;color:#ddd;transform:scaleX(0.8500);transform-origin:0.02px 0;">What to Expect    Why Attend    Agenda    FAQs</div><div class="a" style="left:217px;top:8px;width:43px;height:8.5px;background:#e8506a;"></div><div class="t" style="left:34.9px;top:48.0px;font-size:16.57px;line-height:16.57px;letter-spacing:-0.108px;color:#fff;font-weight:700;">Not your</div><div class="t" style="left:34.9px;top:62.4px;font-size:19.57px;line-height:19.57px;letter-spacing:0.000px;color:#fff;font-family:'Liberation Serif',serif;font-style:italic;">average</div><div class="t" style="left:35.8px;top:86.0px;font-size:16.57px;line-height:16.57px;letter-spacing:0.050px;color:#fff;font-weight:700;">tech event</div><div class="t" style="left:35.8px;top:107.1px;font-size:4.65px;line-height:4.65px;letter-spacing:0.000px;color:#ddd;transform:scaleX(0.6926);transform-origin:0.22px 0;">OCTOBER 17-19 | RALEIGH, NC</div><div class="a" style="left:36px;top:117px;width:36px;height:9px;background:#e8506a;"></div><div class="t" style="left:100.4px;top:166.2px;font-size:9.16px;line-height:9.16px;letter-spacing:0.000px;color:#fff;font-weight:700;transform:scaleX(0.8364);transform-origin:0.61px 0;">Break away from the pack</div><div class="t" style="left:65.6px;top:177.1px;font-size:4.65px;line-height:4.65px;letter-spacing:0.000px;color:#ccc;transform:scaleX(0.8664);transform-origin:0.38px 0;">Mendofest is the festival for people and products doing things differently. And this year we&#x27;re</div><div class="t" style="left:71.7px;top:182.1px;font-size:4.65px;line-height:4.65px;letter-spacing:0.000px;color:#ccc;transform:scaleX(0.8626);transform-origin:0.30px 0;">back—live and in-person—at Raleigh&#x27;s Martin Marietta Center for the Performing Arts.</div></div>
<div class="t" style="left:2268.4px;top:818.3px;font-size:28.05px;line-height:28.05px;letter-spacing:-0.275px;color:#0d0d0d;">Yug duda test</div>
<div class="t" style="left:2267.0px;top:857.7px;font-size:24.71px;line-height:24.71px;letter-spacing:0.403px;color:#4a4a4a;">Registration page</div>
<div class="th" style="left:2608px;top:600px;width:300px;height:200px;border-color:#b8c6d9;"><div class="a" style="left:17.8px;top:20.5px;width:260.5px;height:139.5px;background:radial-gradient(ellipse 70px 75px at 100% 0%,rgba(196,160,242,1) 0%,rgba(196,160,242,0) 100%),linear-gradient(90deg,#f2eff9 0%,#efebf8 55%,#e2daf6 80%,#d3c6f3 100%);border-radius:17px;"></div><div class="a" style="left:24.6px;top:6.7px;width:7.2px;height:7.3px;background:#4a4760;border-radius:50%;"></div><div class="t" style="left:32.6px;top:8.0px;font-size:6.10px;line-height:6.10px;letter-spacing:-0.043px;color:#2f2d40;font-weight:700;">HYPERSAAS</div><div class="t" style="left:189.0px;top:8.8px;font-size:4.36px;line-height:4.36px;letter-spacing:0.000px;color:#666;transform:scaleX(0.9172);transform-origin:0.02px 0;">Why Attend     Agenda</div><div class="a" style="left:238.5px;top:6px;width:32.5px;height:8.4px;background:#5a4c9e;border-radius:1.5px;"></div><svg class="a" style="left:65.5px;top:45.8px" width="164.3" height="55.7" viewBox="0 0 164.3 55.7" preserveAspectRatio="none"><g transform="translate(0 0)" fill="none" stroke-linejoin="miter"><path d="M18.2 17 V8.5 A7.6 6 0 0 0 3.2 8.5 V19 Q3.2 24 8 26.5 L13.5 29.5 Q18.2 32 18.2 37 V47 A7.6 6 0 0 1 3.2 47 V38" stroke="#5b4f9c" stroke-width="5.6"/><path d="M18.2 17 V8.5 A7.6 6 0 0 0 3.2 8.5 V19 Q3.2 24 8 26.5 L13.5 29.5 Q18.2 32 18.2 37 V47 A7.6 6 0 0 1 3.2 47 V38" stroke="#efebf8" stroke-width="3.4"/><path d="M18.2 17 V8.5 A7.6 6 0 0 0 3.2 8.5 V19 Q3.2 24 8 26.5 L13.5 29.5 Q18.2 32 18.2 37 V47 A7.6 6 0 0 1 3.2 47 V38" stroke="#5b4f9c" stroke-width="1.1"/></g><g transform="translate(26.8 0)" fill="none" stroke-linejoin="miter"><path d="M3 55.7 L8.2 2.8 H13.4 L18.6 55.7 M5.6 37 H16" stroke="#5b4f9c" stroke-width="5.6"/><path d="M3 55.7 L8.2 2.8 H13.4 L18.6 55.7 M5.6 37 H16" stroke="#efebf8" stroke-width="3.4"/><path d="M3 55.7 L8.2 2.8 H13.4 L18.6 55.7 M5.6 37 H16" stroke="#5b4f9c" stroke-width="1.1"/></g><g transform="translate(53.5 0)" fill="none" stroke-linejoin="miter"><path d="M3 55.7 L8.2 2.8 H13.4 L18.6 55.7 M5.6 37 H16" stroke="#5b4f9c" stroke-width="5.6"/><path d="M3 55.7 L8.2 2.8 H13.4 L18.6 55.7 M5.6 37 H16" stroke="#efebf8" stroke-width="3.4"/><path d="M3 55.7 L8.2 2.8 H13.4 L18.6 55.7 M5.6 37 H16" stroke="#5b4f9c" stroke-width="1.1"/></g><g transform="translate(81.1 0)" fill="none" stroke-linejoin="miter"><path d="M18.2 17 V8.5 A7.6 6 0 0 0 3.2 8.5 V19 Q3.2 24 8 26.5 L13.5 29.5 Q18.2 32 18.2 37 V47 A7.6 6 0 0 1 3.2 47 V38" stroke="#5b4f9c" stroke-width="5.6"/><path d="M18.2 17 V8.5 A7.6 6 0 0 0 3.2 8.5 V19 Q3.2 24 8 26.5 L13.5 29.5 Q18.2 32 18.2 37 V47 A7.6 6 0 0 1 3.2 47 V38" stroke="#efebf8" stroke-width="3.4"/><path d="M18.2 17 V8.5 A7.6 6 0 0 0 3.2 8.5 V19 Q3.2 24 8 26.5 L13.5 29.5 Q18.2 32 18.2 37 V47 A7.6 6 0 0 1 3.2 47 V38" stroke="#5b4f9c" stroke-width="1.1"/></g><g fill="#5b4f9c"><rect x="110" y="0.7" width="5.8" height="5.8"/><rect x="110" y="15.2" width="5.8" height="40.5"/><rect x="122.3" y="0.7" width="5.1" height="55"/><rect x="131.5" y="0.7" width="9" height="5.1"/><rect x="131.5" y="25.2" width="9" height="5.2"/><path d="M142.5 0.7 H148 L153.4 30 L158.8 0.7 H164.3 L156.3 40 V55.7 H150.5 V40 Z"/></g></svg><div class="t" style="left:79.2px;top:105.0px;font-size:9.59px;line-height:9.59px;letter-spacing:0.000px;color:#4a3f8f;font-weight:700;transform:scaleX(0.6420);transform-origin:0.11px 0;">The Enterprise SAAS Event | Nov 16 &amp; 17, 2024</div><div class="t" style="left:98.5px;top:121.8px;font-size:3.78px;line-height:3.78px;letter-spacing:-0.131px;color:#777;">Explore SaaS Management with leaders, gain insights, sharpen</div><div class="t" style="left:98.7px;top:126.1px;font-size:3.78px;line-height:3.78px;letter-spacing:-0.120px;color:#777;">skills, and leave with actionable strategies to manage costs and</div><div class="t" style="left:139.7px;top:130.3px;font-size:3.78px;line-height:3.78px;letter-spacing:0.000px;color:#777;transform:scaleX(0.8978);transform-origin:0.25px 0;">reduce risk.</div><div class="a" style="left:24.6px;top:179.5px;width:5px;height:5px;background:#999;border-radius:50%;"></div><div class="t" style="left:32.3px;top:180.8px;font-size:4.40px;line-height:4.40px;letter-spacing:0.000px;color:#888;font-weight:700;">Biosynthesis</div><div class="a" style="left:69px;top:179.5px;width:5px;height:5px;background:#999;border-radius:50%;"></div><div class="t" style="left:76.7px;top:180.8px;font-size:4.40px;line-height:4.40px;letter-spacing:0.000px;color:#888;font-weight:700;">FeatherDev</div><div class="a" style="left:111.8px;top:179.5px;width:5px;height:5px;background:#999;border-radius:50%;"></div><div class="t" style="left:119.5px;top:180.8px;font-size:4.40px;line-height:4.40px;letter-spacing:0.000px;color:#888;font-weight:700;">FocalPoint</div><div class="a" style="left:156px;top:179.5px;width:5px;height:5px;background:#999;border-radius:50%;"></div><div class="t" style="left:163.9px;top:180.8px;font-size:4.40px;line-height:4.40px;letter-spacing:0.000px;color:#888;font-weight:700;">Alt+Shift</div><div class="a" style="left:199.4px;top:179.5px;width:5px;height:5px;background:#999;border-radius:50%;"></div><div class="t" style="left:207.1px;top:180.8px;font-size:4.40px;line-height:4.40px;letter-spacing:0.000px;color:#888;font-weight:700;">Lightbox</div><div class="a" style="left:242px;top:179.5px;width:5px;height:5px;background:#999;border-radius:50%;"></div><div class="t" style="left:249.9px;top:180.8px;font-size:4.40px;line-height:4.40px;letter-spacing:0.000px;color:#888;font-weight:700;">Sisyphus</div></div>
<div class="t" style="left:2616.9px;top:818.3px;font-size:28.05px;line-height:28.05px;letter-spacing:-0.225px;color:#0d0d0d;">Arun new template</div>
<div class="t" style="left:2615.0px;top:857.7px;font-size:24.71px;line-height:24.71px;letter-spacing:0.403px;color:#4a4a4a;">Registration page</div>
<div class="th" style="left:520px;top:965px;width:300px;height:200px;border-color:#b8c6d9;"><div class="a" style="left:0px;top:18.5px;width:296px;height:178px;background:linear-gradient(45deg,#f2d0e4 0%,#eccfe4 24%,#cbc7e3 47%,#a8bfe3 72%,#6ab1e0 100%);"></div><svg class="a" style="left:9px;top:4px" width="10" height="10" viewBox="0 0 10 10"><circle cx="5" cy="5" r="3.6" fill="none" stroke="#3b6fe0" stroke-width="2"/><circle cx="5" cy="5" r="1.3" fill="#3b6fe0"/></svg><div class="t" style="left:20.7px;top:5.7px;font-size:7.99px;line-height:7.99px;letter-spacing:0.000px;color:#222;font-weight:700;transform:scaleX(0.8465);transform-origin:0.33px 0;">Credibox</div><div class="t" style="left:88.1px;top:8.4px;font-size:4.65px;line-height:4.65px;letter-spacing:0.000px;color:#666;transform:scaleX(0.9307);transform-origin:0.38px 0;">Home</div><div class="t" style="left:107.5px;top:8.4px;font-size:4.65px;line-height:4.65px;letter-spacing:-0.153px;color:#666;">About</div><div class="t" style="left:126.6px;top:8.4px;font-size:4.65px;line-height:4.65px;letter-spacing:0.000px;color:#666;transform:scaleX(0.9237);transform-origin:0.21px 0;">Speakers</div><div class="t" style="left:152.9px;top:8.4px;font-size:4.65px;line-height:4.65px;letter-spacing:0.000px;color:#666;transform:scaleX(0.9047);transform-origin:0.01px 0;">Agenda</div><div class="t" style="left:175.7px;top:8.4px;font-size:4.65px;line-height:4.65px;letter-spacing:0.000px;color:#666;transform:scaleX(0.9130);transform-origin:0.10px 0;">Tickets</div><div class="t" style="left:196.9px;top:8.4px;font-size:4.65px;line-height:4.65px;letter-spacing:0.000px;color:#666;transform:scaleX(0.8468);transform-origin:0.38px 0;">FAQs</div><div class="a" style="left:250px;top:5px;width:37px;height:9px;background:#4565f0;border-radius:1px;"></div><div class="t" style="left:40.9px;top:44.3px;font-size:14.97px;line-height:14.97px;letter-spacing:0.000px;color:#17234f;font-weight:700;transform:scaleX(0.9116);transform-origin:0.61px 0;">CXO Product 2023 Conference is</div><div class="t" style="left:95.0px;top:61.3px;font-size:14.97px;line-height:14.97px;letter-spacing:0.000px;color:#17234f;font-weight:700;transform:scaleX(0.9173);transform-origin:1.05px 0;">happening now!</div><div class="t" style="left:131.9px;top:78.7px;font-size:5.09px;line-height:5.09px;letter-spacing:0.000px;color:#333;transform:scaleX(0.8977);transform-origin:0.08px 0;">Join us virtually!</div><div class="t" style="left:78.0px;top:85.2px;font-size:5.09px;line-height:5.09px;letter-spacing:0.000px;color:#333;transform:scaleX(0.8569);transform-origin:0.01px 0;">AMERICAS &amp; EMEA: November 2-3, 2023 | APAC: November 8-9, 2023</div><div class="a" style="left:32px;top:105px;width:231px;height:29px;background:rgba(255,255,255,0.25);"></div><div class="t" style="left:43.1px;top:111.0px;font-size:9.45px;line-height:9.45px;letter-spacing:0.000px;color:#fff;font-weight:700;">30000+</div><div class="a" style="left:47px;top:124px;width:24px;height:2px;background:rgba(255,255,255,0.35);"></div><div class="t" style="left:110.5px;top:111.0px;font-size:9.45px;line-height:9.45px;letter-spacing:0.000px;color:#fff;font-weight:700;">50+</div><div class="a" style="left:106.5px;top:124px;width:24px;height:2px;background:rgba(255,255,255,0.35);"></div><div class="t" style="left:169.0px;top:111.0px;font-size:9.45px;line-height:9.45px;letter-spacing:0.000px;color:#fff;font-weight:700;">20+</div><div class="a" style="left:165px;top:124px;width:24px;height:2px;background:rgba(255,255,255,0.35);"></div><div class="t" style="left:225.2px;top:111.0px;font-size:9.45px;line-height:9.45px;letter-spacing:0.000px;color:#fff;font-weight:700;">100+</div><div class="a" style="left:224px;top:124px;width:24px;height:2px;background:rgba(255,255,255,0.35);"></div></div>
<div class="t" style="left:528.4px;top:1183.3px;font-size:28.05px;line-height:28.05px;letter-spacing:-0.474px;color:#0d0d0d;">Testdemo</div>
<div class="t" style="left:527.0px;top:1222.7px;font-size:24.71px;line-height:24.71px;letter-spacing:0.403px;color:#4a4a4a;">Registration page</div>
<div class="th" style="left:868px;top:965px;width:300px;height:200px;border-color:#b8c6d9;"><div class="a" style="left:17.8px;top:20.5px;width:260.5px;height:139.5px;background:radial-gradient(ellipse 70px 75px at 100% 0%,rgba(196,160,242,1) 0%,rgba(196,160,242,0) 100%),linear-gradient(90deg,#f2eff9 0%,#efebf8 55%,#e2daf6 80%,#d3c6f3 100%);border-radius:17px;"></div><div class="a" style="left:24.6px;top:6.7px;width:7.2px;height:7.3px;background:#4a4760;border-radius:50%;"></div><div class="t" style="left:32.6px;top:8.0px;font-size:6.10px;line-height:6.10px;letter-spacing:-0.043px;color:#2f2d40;font-weight:700;">HYPERSAAS</div><div class="t" style="left:189.0px;top:8.8px;font-size:4.36px;line-height:4.36px;letter-spacing:0.000px;color:#666;transform:scaleX(0.9172);transform-origin:0.02px 0;">Why Attend     Agenda</div><div class="a" style="left:238.5px;top:6px;width:32.5px;height:8.4px;background:#5a4c9e;border-radius:1.5px;"></div><svg class="a" style="left:17px;top:51.6px" width="126.5" height="43.4" viewBox="0 0 164.3 55.7" preserveAspectRatio="none"><g transform="translate(0 0)" fill="none" stroke-linejoin="miter"><path d="M18.2 17 V8.5 A7.6 6 0 0 0 3.2 8.5 V19 Q3.2 24 8 26.5 L13.5 29.5 Q18.2 32 18.2 37 V47 A7.6 6 0 0 1 3.2 47 V38" stroke="#5b4f9c" stroke-width="5.6"/><path d="M18.2 17 V8.5 A7.6 6 0 0 0 3.2 8.5 V19 Q3.2 24 8 26.5 L13.5 29.5 Q18.2 32 18.2 37 V47 A7.6 6 0 0 1 3.2 47 V38" stroke="#efebf8" stroke-width="3.4"/><path d="M18.2 17 V8.5 A7.6 6 0 0 0 3.2 8.5 V19 Q3.2 24 8 26.5 L13.5 29.5 Q18.2 32 18.2 37 V47 A7.6 6 0 0 1 3.2 47 V38" stroke="#5b4f9c" stroke-width="1.1"/></g><g transform="translate(26.8 0)" fill="none" stroke-linejoin="miter"><path d="M3 55.7 L8.2 2.8 H13.4 L18.6 55.7 M5.6 37 H16" stroke="#5b4f9c" stroke-width="5.6"/><path d="M3 55.7 L8.2 2.8 H13.4 L18.6 55.7 M5.6 37 H16" stroke="#efebf8" stroke-width="3.4"/><path d="M3 55.7 L8.2 2.8 H13.4 L18.6 55.7 M5.6 37 H16" stroke="#5b4f9c" stroke-width="1.1"/></g><g transform="translate(53.5 0)" fill="none" stroke-linejoin="miter"><path d="M3 55.7 L8.2 2.8 H13.4 L18.6 55.7 M5.6 37 H16" stroke="#5b4f9c" stroke-width="5.6"/><path d="M3 55.7 L8.2 2.8 H13.4 L18.6 55.7 M5.6 37 H16" stroke="#efebf8" stroke-width="3.4"/><path d="M3 55.7 L8.2 2.8 H13.4 L18.6 55.7 M5.6 37 H16" stroke="#5b4f9c" stroke-width="1.1"/></g><g transform="translate(81.1 0)" fill="none" stroke-linejoin="miter"><path d="M18.2 17 V8.5 A7.6 6 0 0 0 3.2 8.5 V19 Q3.2 24 8 26.5 L13.5 29.5 Q18.2 32 18.2 37 V47 A7.6 6 0 0 1 3.2 47 V38" stroke="#5b4f9c" stroke-width="5.6"/><path d="M18.2 17 V8.5 A7.6 6 0 0 0 3.2 8.5 V19 Q3.2 24 8 26.5 L13.5 29.5 Q18.2 32 18.2 37 V47 A7.6 6 0 0 1 3.2 47 V38" stroke="#efebf8" stroke-width="3.4"/><path d="M18.2 17 V8.5 A7.6 6 0 0 0 3.2 8.5 V19 Q3.2 24 8 26.5 L13.5 29.5 Q18.2 32 18.2 37 V47 A7.6 6 0 0 1 3.2 47 V38" stroke="#5b4f9c" stroke-width="1.1"/></g><g fill="#5b4f9c"><rect x="110" y="0.7" width="5.8" height="5.8"/><rect x="110" y="15.2" width="5.8" height="40.5"/><rect x="122.3" y="0.7" width="5.1" height="55"/><rect x="131.5" y="0.7" width="9" height="5.1"/><rect x="131.5" y="25.2" width="9" height="5.2"/><path d="M142.5 0.7 H148 L153.4 30 L158.8 0.7 H164.3 L156.3 40 V55.7 H150.5 V40 Z"/></g></svg><div class="t" style="left:69.9px;top:97.9px;font-size:9.59px;line-height:9.59px;letter-spacing:0.000px;color:#4a3f8f;font-weight:700;transform:scaleX(0.6535);transform-origin:0.11px 0;">The Enterprise SAAS Event | August 21 &amp; 22nd 2025</div><div class="t" style="left:98.5px;top:116.3px;font-size:3.78px;line-height:3.78px;letter-spacing:-0.131px;color:#777;">Explore SaaS Management with leaders, gain insights, sharpen</div><div class="t" style="left:98.7px;top:120.6px;font-size:3.78px;line-height:3.78px;letter-spacing:-0.120px;color:#777;">skills, and leave with actionable strategies to manage costs and</div><div class="t" style="left:139.7px;top:124.8px;font-size:3.78px;line-height:3.78px;letter-spacing:0.000px;color:#777;transform:scaleX(0.8978);transform-origin:0.25px 0;">reduce risk.</div><div class="a" style="left:24.6px;top:179.5px;width:5px;height:5px;background:#999;border-radius:50%;"></div><div class="t" style="left:32.3px;top:180.8px;font-size:4.40px;line-height:4.40px;letter-spacing:0.000px;color:#888;font-weight:700;">Biosynthesis</div><div class="a" style="left:69px;top:179.5px;width:5px;height:5px;background:#999;border-radius:50%;"></div><div class="t" style="left:76.7px;top:180.8px;font-size:4.40px;line-height:4.40px;letter-spacing:0.000px;color:#888;font-weight:700;">FeatherDev</div><div class="a" style="left:111.8px;top:179.5px;width:5px;height:5px;background:#999;border-radius:50%;"></div><div class="t" style="left:119.5px;top:180.8px;font-size:4.40px;line-height:4.40px;letter-spacing:0.000px;color:#888;font-weight:700;">FocalPoint</div><div class="a" style="left:156px;top:179.5px;width:5px;height:5px;background:#999;border-radius:50%;"></div><div class="t" style="left:163.9px;top:180.8px;font-size:4.40px;line-height:4.40px;letter-spacing:0.000px;color:#888;font-weight:700;">Alt+Shift</div><div class="a" style="left:199.4px;top:179.5px;width:5px;height:5px;background:#999;border-radius:50%;"></div><div class="t" style="left:207.1px;top:180.8px;font-size:4.40px;line-height:4.40px;letter-spacing:0.000px;color:#888;font-weight:700;">Lightbox</div><div class="a" style="left:242px;top:179.5px;width:5px;height:5px;background:#999;border-radius:50%;"></div><div class="t" style="left:249.9px;top:180.8px;font-size:4.40px;line-height:4.40px;letter-spacing:0.000px;color:#888;font-weight:700;">Sisyphus</div></div>
<div class="t" style="left:874.7px;top:1183.3px;font-size:28.05px;line-height:28.05px;letter-spacing:0.042px;color:#0d0d0d;">Kaushiki testing</div>
<div class="t" style="left:876.6px;top:1214.9px;font-size:28.05px;line-height:28.05px;letter-spacing:-0.132px;color:#0d0d0d;">template</div>
<div class="t" style="left:875.0px;top:1254.3px;font-size:24.71px;line-height:24.71px;letter-spacing:0.403px;color:#4a4a4a;">Registration page</div>
<div class="th" style="left:1216px;top:965px;width:300px;height:200px;border-color:#b8c6d9;"><div class="a" style="left:0px;top:18.5px;width:296px;height:141px;background:linear-gradient(45deg,#f2d0e4 0%,#eccfe4 24%,#cbc7e3 47%,#a8bfe3 72%,#6ab1e0 100%);"></div><svg class="a" style="left:9px;top:4px" width="10" height="10" viewBox="0 0 10 10"><circle cx="5" cy="5" r="3.6" fill="none" stroke="#3b6fe0" stroke-width="2"/><circle cx="5" cy="5" r="1.3" fill="#3b6fe0"/></svg><div class="t" style="left:20.7px;top:5.7px;font-size:7.99px;line-height:7.99px;letter-spacing:0.000px;color:#222;font-weight:700;transform:scaleX(0.8465);transform-origin:0.33px 0;">Credibox</div><div class="t" style="left:88.1px;top:8.4px;font-size:4.65px;line-height:4.65px;letter-spacing:0.000px;color:#666;transform:scaleX(0.9307);transform-origin:0.38px 0;">Home</div><div class="t" style="left:107.5px;top:8.4px;font-size:4.65px;line-height:4.65px;letter-spacing:-0.153px;color:#666;">About</div><div class="t" style="left:126.6px;top:8.4px;font-size:4.65px;line-height:4.65px;letter-spacing:0.000px;color:#666;transform:scaleX(0.9237);transform-origin:0.21px 0;">Speakers</div><div class="t" style="left:152.9px;top:8.4px;font-size:4.65px;line-height:4.65px;letter-spacing:0.000px;color:#666;transform:scaleX(0.9047);transform-origin:0.01px 0;">Agenda</div><div class="t" style="left:175.7px;top:8.4px;font-size:4.65px;line-height:4.65px;letter-spacing:0.000px;color:#666;transform:scaleX(0.9130);transform-origin:0.10px 0;">Tickets</div><div class="t" style="left:196.9px;top:8.4px;font-size:4.65px;line-height:4.65px;letter-spacing:0.000px;color:#666;transform:scaleX(0.8468);transform-origin:0.38px 0;">FAQs</div><div class="a" style="left:250px;top:5px;width:37px;height:9px;background:#4565f0;border-radius:1px;"></div><div class="t" style="left:40.9px;top:44.3px;font-size:14.97px;line-height:14.97px;letter-spacing:0.000px;color:#17234f;font-weight:700;transform:scaleX(0.9116);transform-origin:0.61px 0;">CXO Product 2023 Conference is</div><div class="t" style="left:95.0px;top:61.3px;font-size:14.97px;line-height:14.97px;letter-spacing:0.000px;color:#17234f;font-weight:700;transform:scaleX(0.9173);transform-origin:1.05px 0;">happening now!</div><div class="t" style="left:131.9px;top:78.7px;font-size:5.09px;line-height:5.09px;letter-spacing:0.000px;color:#333;transform:scaleX(0.8977);transform-origin:0.08px 0;">Join us virtually!</div><div class="t" style="left:78.0px;top:85.2px;font-size:5.09px;line-height:5.09px;letter-spacing:0.000px;color:#333;transform:scaleX(0.8569);transform-origin:0.01px 0;">AMERICAS &amp; EMEA: November 2-3, 2023 | APAC: November 8-9, 2023</div><div class="a" style="left:32px;top:105px;width:231px;height:29px;background:rgba(255,255,255,0.25);"></div><div class="t" style="left:43.1px;top:111.0px;font-size:9.45px;line-height:9.45px;letter-spacing:0.000px;color:#fff;font-weight:700;">30000+</div><div class="a" style="left:47px;top:124px;width:24px;height:2px;background:rgba(255,255,255,0.35);"></div><div class="t" style="left:110.5px;top:111.0px;font-size:9.45px;line-height:9.45px;letter-spacing:0.000px;color:#fff;font-weight:700;">50+</div><div class="a" style="left:106.5px;top:124px;width:24px;height:2px;background:rgba(255,255,255,0.35);"></div><div class="t" style="left:169.0px;top:111.0px;font-size:9.45px;line-height:9.45px;letter-spacing:0.000px;color:#fff;font-weight:700;">20+</div><div class="a" style="left:165px;top:124px;width:24px;height:2px;background:rgba(255,255,255,0.35);"></div><div class="t" style="left:225.2px;top:111.0px;font-size:9.45px;line-height:9.45px;letter-spacing:0.000px;color:#fff;font-weight:700;">100+</div><div class="a" style="left:224px;top:124px;width:24px;height:2px;background:rgba(255,255,255,0.35);"></div><div class="t" style="left:89.9px;top:179.9px;font-size:8.43px;line-height:8.43px;letter-spacing:0.000px;color:#1a1a1a;font-weight:700;transform:scaleX(0.8985);transform-origin:0.09px 0;">The stage is set for two amazing</div><div class="t" style="left:76.4px;top:189.9px;font-size:8.43px;line-height:8.43px;letter-spacing:-0.326px;color:#1a1a1a;font-weight:700;">keynotes with industry-leading experts</div></div>
<div class="t" style="left:1222.7px;top:1183.3px;font-size:28.05px;line-height:28.05px;letter-spacing:0.931px;color:#0d0d0d;">L</div>
<div class="t" style="left:1223.0px;top:1222.7px;font-size:24.71px;line-height:24.71px;letter-spacing:0.403px;color:#4a4a4a;">Registration page</div>
<div class="th" style="left:1564px;top:965px;width:300px;height:200px;border-color:#b8c6d9;"><div class="a" style="left:27.7px;top:24.6px;width:240.3px;height:180px;border:1px solid #f6f6f8;"></div><div class="a" style="left:24.6px;top:6.7px;width:7.2px;height:7.3px;background:#4a4760;border-radius:50%;"></div><div class="t" style="left:32.6px;top:8.0px;font-size:6.10px;line-height:6.10px;letter-spacing:-0.043px;color:#2f2d40;font-weight:700;">HYPERSAAS</div><div class="t" style="left:173.0px;top:8.8px;font-size:4.36px;line-height:4.36px;letter-spacing:0.000px;color:#666;transform:scaleX(0.8943);transform-origin:0.02px 0;">Why Attend     Agenda</div><div class="a" style="left:218.6px;top:6px;width:33px;height:8.4px;background:#5a4c9e;border-radius:1.5px;"></div><div class="a" style="left:264px;top:8.5px;width:5px;height:4px;background:#d55;"></div></div>
<div class="t" style="left:1572.9px;top:1183.3px;font-size:28.05px;line-height:28.05px;letter-spacing:-0.047px;color:#0d0d0d;">Vinil&#x27;s template</div>
<div class="t" style="left:1571.0px;top:1222.7px;font-size:24.71px;line-height:24.71px;letter-spacing:0.403px;color:#4a4a4a;">Registration page</div>
<div class="th" style="left:1912px;top:965px;width:300px;height:200px;border-color:#b8c6d9;"><div class="a" style="left:17.8px;top:20.5px;width:260.5px;height:139.5px;background:radial-gradient(ellipse 70px 75px at 100% 0%,rgba(196,160,242,1) 0%,rgba(196,160,242,0) 100%),linear-gradient(90deg,#f2eff9 0%,#efebf8 55%,#e2daf6 80%,#d3c6f3 100%);border-radius:17px;"></div><div class="a" style="left:24.6px;top:6.7px;width:7.2px;height:7.3px;background:#4a4760;border-radius:50%;"></div><div class="t" style="left:32.6px;top:8.0px;font-size:6.10px;line-height:6.10px;letter-spacing:-0.043px;color:#2f2d40;font-weight:700;">HYPERSAAS</div><div class="t" style="left:189.0px;top:8.8px;font-size:4.36px;line-height:4.36px;letter-spacing:0.000px;color:#666;transform:scaleX(0.9172);transform-origin:0.02px 0;">Why Attend     Agenda</div><div class="a" style="left:238.5px;top:6px;width:32.5px;height:8.4px;background:#5a4c9e;border-radius:1.5px;"></div><svg class="a" style="left:65.5px;top:45.8px" width="164.3" height="55.7" viewBox="0 0 164.3 55.7" preserveAspectRatio="none"><g transform="translate(0 0)" fill="none" stroke-linejoin="miter"><path d="M18.2 17 V8.5 A7.6 6 0 0 0 3.2 8.5 V19 Q3.2 24 8 26.5 L13.5 29.5 Q18.2 32 18.2 37 V47 A7.6 6 0 0 1 3.2 47 V38" stroke="#5b4f9c" stroke-width="5.6"/><path d="M18.2 17 V8.5 A7.6 6 0 0 0 3.2 8.5 V19 Q3.2 24 8 26.5 L13.5 29.5 Q18.2 32 18.2 37 V47 A7.6 6 0 0 1 3.2 47 V38" stroke="#efebf8" stroke-width="3.4"/><path d="M18.2 17 V8.5 A7.6 6 0 0 0 3.2 8.5 V19 Q3.2 24 8 26.5 L13.5 29.5 Q18.2 32 18.2 37 V47 A7.6 6 0 0 1 3.2 47 V38" stroke="#5b4f9c" stroke-width="1.1"/></g><g transform="translate(26.8 0)" fill="none" stroke-linejoin="miter"><path d="M3 55.7 L8.2 2.8 H13.4 L18.6 55.7 M5.6 37 H16" stroke="#5b4f9c" stroke-width="5.6"/><path d="M3 55.7 L8.2 2.8 H13.4 L18.6 55.7 M5.6 37 H16" stroke="#efebf8" stroke-width="3.4"/><path d="M3 55.7 L8.2 2.8 H13.4 L18.6 55.7 M5.6 37 H16" stroke="#5b4f9c" stroke-width="1.1"/></g><g transform="translate(53.5 0)" fill="none" stroke-linejoin="miter"><path d="M3 55.7 L8.2 2.8 H13.4 L18.6 55.7 M5.6 37 H16" stroke="#5b4f9c" stroke-width="5.6"/><path d="M3 55.7 L8.2 2.8 H13.4 L18.6 55.7 M5.6 37 H16" stroke="#efebf8" stroke-width="3.4"/><path d="M3 55.7 L8.2 2.8 H13.4 L18.6 55.7 M5.6 37 H16" stroke="#5b4f9c" stroke-width="1.1"/></g><g transform="translate(81.1 0)" fill="none" stroke-linejoin="miter"><path d="M18.2 17 V8.5 A7.6 6 0 0 0 3.2 8.5 V19 Q3.2 24 8 26.5 L13.5 29.5 Q18.2 32 18.2 37 V47 A7.6 6 0 0 1 3.2 47 V38" stroke="#5b4f9c" stroke-width="5.6"/><path d="M18.2 17 V8.5 A7.6 6 0 0 0 3.2 8.5 V19 Q3.2 24 8 26.5 L13.5 29.5 Q18.2 32 18.2 37 V47 A7.6 6 0 0 1 3.2 47 V38" stroke="#efebf8" stroke-width="3.4"/><path d="M18.2 17 V8.5 A7.6 6 0 0 0 3.2 8.5 V19 Q3.2 24 8 26.5 L13.5 29.5 Q18.2 32 18.2 37 V47 A7.6 6 0 0 1 3.2 47 V38" stroke="#5b4f9c" stroke-width="1.1"/></g><g fill="#5b4f9c"><rect x="110" y="0.7" width="5.8" height="5.8"/><rect x="110" y="15.2" width="5.8" height="40.5"/><rect x="122.3" y="0.7" width="5.1" height="55"/><rect x="131.5" y="0.7" width="9" height="5.1"/><rect x="131.5" y="25.2" width="9" height="5.2"/><path d="M142.5 0.7 H148 L153.4 30 L158.8 0.7 H164.3 L156.3 40 V55.7 H150.5 V40 Z"/></g></svg><div class="t" style="left:79.2px;top:105.0px;font-size:9.59px;line-height:9.59px;letter-spacing:0.000px;color:#4a3f8f;font-weight:700;transform:scaleX(0.6420);transform-origin:0.11px 0;">The Enterprise SAAS Event | Nov 16 &amp; 17, 2024</div><div class="t" style="left:98.5px;top:121.8px;font-size:3.78px;line-height:3.78px;letter-spacing:-0.131px;color:#777;">Explore SaaS Management with leaders, gain insights, sharpen</div><div class="t" style="left:98.7px;top:126.1px;font-size:3.78px;line-height:3.78px;letter-spacing:-0.120px;color:#777;">skills, and leave with actionable strategies to manage costs and</div><div class="t" style="left:139.7px;top:130.3px;font-size:3.78px;line-height:3.78px;letter-spacing:0.000px;color:#777;transform:scaleX(0.8978);transform-origin:0.25px 0;">reduce risk.</div><div class="a" style="left:24.6px;top:179.5px;width:5px;height:5px;background:#999;border-radius:50%;"></div><div class="t" style="left:32.3px;top:180.8px;font-size:4.40px;line-height:4.40px;letter-spacing:0.000px;color:#888;font-weight:700;">Biosynthesis</div><div class="a" style="left:69px;top:179.5px;width:5px;height:5px;background:#999;border-radius:50%;"></div><div class="t" style="left:76.7px;top:180.8px;font-size:4.40px;line-height:4.40px;letter-spacing:0.000px;color:#888;font-weight:700;">FeatherDev</div><div class="a" style="left:111.8px;top:179.5px;width:5px;height:5px;background:#999;border-radius:50%;"></div><div class="t" style="left:119.5px;top:180.8px;font-size:4.40px;line-height:4.40px;letter-spacing:0.000px;color:#888;font-weight:700;">FocalPoint</div><div class="a" style="left:156px;top:179.5px;width:5px;height:5px;background:#999;border-radius:50%;"></div><div class="t" style="left:163.9px;top:180.8px;font-size:4.40px;line-height:4.40px;letter-spacing:0.000px;color:#888;font-weight:700;">Alt+Shift</div><div class="a" style="left:199.4px;top:179.5px;width:5px;height:5px;background:#999;border-radius:50%;"></div><div class="t" style="left:207.1px;top:180.8px;font-size:4.40px;line-height:4.40px;letter-spacing:0.000px;color:#888;font-weight:700;">Lightbox</div><div class="a" style="left:242px;top:179.5px;width:5px;height:5px;background:#999;border-radius:50%;"></div><div class="t" style="left:249.9px;top:180.8px;font-size:4.40px;line-height:4.40px;letter-spacing:0.000px;color:#888;font-weight:700;">Sisyphus</div></div>
<div class="t" style="left:1920.9px;top:1183.3px;font-size:28.05px;line-height:28.05px;letter-spacing:-0.149px;color:#0d0d0d;">Arun testing template</div>
<div class="t" style="left:1919.0px;top:1222.7px;font-size:24.71px;line-height:24.71px;letter-spacing:0.403px;color:#4a4a4a;">Registration page</div>
<div class="th" style="left:2260px;top:965px;width:300px;height:200px;border-color:#b8c6d9;"><div class="a" style="left:0px;top:18.5px;width:296px;height:178px;background:linear-gradient(45deg,#f2d0e4 0%,#eccfe4 24%,#cbc7e3 47%,#a8bfe3 72%,#6ab1e0 100%);"></div><svg class="a" style="left:9px;top:4px" width="10" height="10" viewBox="0 0 10 10"><circle cx="5" cy="5" r="3.6" fill="none" stroke="#3b6fe0" stroke-width="2"/><circle cx="5" cy="5" r="1.3" fill="#3b6fe0"/></svg><div class="t" style="left:20.7px;top:5.7px;font-size:7.99px;line-height:7.99px;letter-spacing:0.000px;color:#222;font-weight:700;transform:scaleX(0.8465);transform-origin:0.33px 0;">Credibox</div><div class="t" style="left:88.1px;top:8.4px;font-size:4.65px;line-height:4.65px;letter-spacing:0.000px;color:#666;transform:scaleX(0.9307);transform-origin:0.38px 0;">Home</div><div class="t" style="left:107.5px;top:8.4px;font-size:4.65px;line-height:4.65px;letter-spacing:-0.153px;color:#666;">About</div><div class="t" style="left:126.6px;top:8.4px;font-size:4.65px;line-height:4.65px;letter-spacing:0.000px;color:#666;transform:scaleX(0.9237);transform-origin:0.21px 0;">Speakers</div><div class="t" style="left:152.9px;top:8.4px;font-size:4.65px;line-height:4.65px;letter-spacing:0.000px;color:#666;transform:scaleX(0.9047);transform-origin:0.01px 0;">Agenda</div><div class="t" style="left:175.7px;top:8.4px;font-size:4.65px;line-height:4.65px;letter-spacing:0.000px;color:#666;transform:scaleX(0.9130);transform-origin:0.10px 0;">Tickets</div><div class="t" style="left:196.9px;top:8.4px;font-size:4.65px;line-height:4.65px;letter-spacing:0.000px;color:#666;transform:scaleX(0.8468);transform-origin:0.38px 0;">FAQs</div><div class="a" style="left:250px;top:5px;width:37px;height:9px;background:#4565f0;border-radius:1px;"></div><div class="t" style="left:40.9px;top:44.3px;font-size:14.97px;line-height:14.97px;letter-spacing:0.000px;color:#17234f;font-weight:700;transform:scaleX(0.9116);transform-origin:0.61px 0;">CXO Product 2023 Conference is</div><div class="t" style="left:95.0px;top:61.3px;font-size:14.97px;line-height:14.97px;letter-spacing:0.000px;color:#17234f;font-weight:700;transform:scaleX(0.9173);transform-origin:1.05px 0;">happening now!</div><div class="t" style="left:131.9px;top:78.7px;font-size:5.09px;line-height:5.09px;letter-spacing:0.000px;color:#333;transform:scaleX(0.8977);transform-origin:0.08px 0;">Join us virtually!</div><div class="t" style="left:78.0px;top:85.2px;font-size:5.09px;line-height:5.09px;letter-spacing:0.000px;color:#333;transform:scaleX(0.8569);transform-origin:0.01px 0;">AMERICAS &amp; EMEA: November 2-3, 2023 | APAC: November 8-9, 2023</div><div class="a" style="left:32px;top:105px;width:231px;height:29px;background:rgba(255,255,255,0.25);"></div><div class="t" style="left:43.1px;top:111.0px;font-size:9.45px;line-height:9.45px;letter-spacing:0.000px;color:#fff;font-weight:700;">30000+</div><div class="a" style="left:47px;top:124px;width:24px;height:2px;background:rgba(255,255,255,0.35);"></div><div class="t" style="left:110.5px;top:111.0px;font-size:9.45px;line-height:9.45px;letter-spacing:0.000px;color:#fff;font-weight:700;">50+</div><div class="a" style="left:106.5px;top:124px;width:24px;height:2px;background:rgba(255,255,255,0.35);"></div><div class="t" style="left:169.0px;top:111.0px;font-size:9.45px;line-height:9.45px;letter-spacing:0.000px;color:#fff;font-weight:700;">20+</div><div class="a" style="left:165px;top:124px;width:24px;height:2px;background:rgba(255,255,255,0.35);"></div><div class="t" style="left:225.2px;top:111.0px;font-size:9.45px;line-height:9.45px;letter-spacing:0.000px;color:#fff;font-weight:700;">100+</div><div class="a" style="left:224px;top:124px;width:24px;height:2px;background:rgba(255,255,255,0.35);"></div></div>
<div class="t" style="left:2267.7px;top:1183.3px;font-size:28.05px;line-height:28.05px;letter-spacing:-0.226px;color:#0d0d0d;">Site testing qa demo</div>
<div class="t" style="left:2267.0px;top:1222.7px;font-size:24.71px;line-height:24.71px;letter-spacing:0.403px;color:#4a4a4a;">Registration page</div>
<div class="th" style="left:520px;top:1529px;width:300px;height:200px;border-color:#b8c6d9;"><div class="a" style="left:0px;top:0px;width:296px;height:196px;background:linear-gradient(90deg,#18401f 0%,#1d4a23 50%,#24592a 100%);"></div><svg class="a" style="left:0px;top:0px" width="296" height="196" viewBox="0 0 296 196"><path d="M133 0 C140 35 175 62 296 76 V0 Z" fill="#275f29"/><path d="M150 0 C160 40 200 68 296 80 L296 110 C200 95 150 60 133 0 Z" fill="rgba(0,0,0,0)"/><path d="M225 0 C232 22 252 40 296 46 V0 Z" fill="#347230"/><path d="M90 196 C150 150 220 110 296 100 V196 Z" fill="#22562a"/></svg><div class="a" style="left:27px;top:7px;width:6px;height:6px;background:#4caf50;border-radius:1px;"></div><div class="t" style="left:34.9px;top:7.5px;font-size:6.54px;line-height:6.54px;letter-spacing:0.000px;color:#fff;font-weight:700;font-family:'Liberation Serif',serif;transform:scaleX(1.4243);transform-origin:0.13px 0;">zenith</div><div class="t" style="left:26.8px;top:29.2px;font-size:14.53px;line-height:14.53px;letter-spacing:0.000px;color:#fff;transform:scaleX(1.2605);transform-origin:0.23px 0;">Join us at</div><div class="t" style="left:26.5px;top:48.7px;font-size:14.53px;line-height:14.53px;letter-spacing:0.000px;color:#fff;transform:scaleX(1.2406);transform-origin:0.46px 0;">Zenith series</div><div class="t" style="left:26.6px;top:71.3px;font-size:4.36px;line-height:4.36px;letter-spacing:-0.026px;color:#e8f0e8;">Discover the future of SaaS at our multi-city tour. Immerse yourself in hands-on</div><div class="t" style="left:27.0px;top:77.8px;font-size:4.36px;line-height:4.36px;letter-spacing:-0.036px;color:#e8f0e8;">workshops, connect with industry leaders &amp; explore groundbreaking technology.</div><div class="a" style="left:27px;top:88px;width:34px;height:12px;background:#5cb85c;border-radius:4px;"></div></div>
<div class="th" style="left:868px;top:1529px;width:300px;height:200px;border-color:#b8c6d9;"><div class="a" style="left:0px;top:0px;width:296px;height:196px;background:#000;"></div><div class="a" style="left:12.5px;top:6px;width:5px;height:8px;border:1px solid #ddd;border-radius:1px;"></div><div class="t" style="left:247.7px;top:8.6px;font-size:4.07px;line-height:4.07px;letter-spacing:0.000px;color:#ddd;transform:scaleX(0.8931);transform-origin:0.33px 0;">FAQ</div><div class="a" style="left:261px;top:4.5px;width:22px;height:9px;background:#fff;border-radius:1.5px;"></div><div class="t" style="left:12.2px;top:46.4px;font-size:3.63px;line-height:3.63px;letter-spacing:-0.070px;color:#999;">IN-PERSON</div><div class="t" style="left:11.6px;top:55.9px;font-size:12.79px;line-height:12.79px;letter-spacing:0.000px;color:#fff;transform:scaleX(0.8969);transform-origin:0.91px 0;">[Figma x GitHub] The Future of Development</div><div class="t" style="left:12.3px;top:74.3px;font-size:6.69px;line-height:6.69px;letter-spacing:0.000px;color:#fff;transform:scaleX(0.9071);transform-origin:0.15px 0;text-decoration:underline;">The Leela Palace Bengaluru</div><div class="t" style="left:12.2px;top:82.2px;font-size:5.09px;line-height:5.09px;letter-spacing:-0.135px;color:#bbb;">23, HAL Old Airport Rd, HAL 2nd Stage</div><div class="t" style="left:146.0px;top:74.3px;font-size:6.69px;line-height:6.69px;letter-spacing:0.000px;color:#fff;transform:scaleX(0.9278);transform-origin:0.55px 0;">Monday, November 10</div><div class="t" style="left:146.2px;top:83.3px;font-size:6.69px;line-height:6.69px;letter-spacing:-0.170px;color:#fff;">2:30PM - 6:00pm IST</div></div>
<div class="th" style="left:1216px;top:1529px;width:300px;height:200px;border-color:#b8c6d9;"><div class="a" style="left:0px;top:0px;width:296px;height:196px;background:linear-gradient(180deg,#3a40e6 0%,#3438dc 100%);"></div><div class="a" style="left:12px;top:4.5px;width:5px;height:5px;background:#fff;border-radius:50%;"></div><div class="t" style="left:18.3px;top:4.0px;font-size:6.54px;line-height:6.54px;letter-spacing:0.000px;color:#fff;font-weight:700;transform:scaleX(0.7842);transform-origin:0.23px 0;">stellaris</div><div class="t" style="left:48.8px;top:6.6px;font-size:4.07px;line-height:4.07px;letter-spacing:-0.118px;color:#dde;">Sessions     Speakers     Sponsors     FAQ</div><div class="a" style="left:260px;top:3px;width:24px;height:10px;background:#fff;border-radius:1.5px;"></div></div>
<div class="th" style="left:1564px;top:1529px;width:300px;height:200px;border-color:#b8c6d9;"><div class="a" style="left:34.4px;top:6.4px;width:5.6px;height:5.6px;background:#111;border-radius:50%;"></div><div class="t" style="left:40.6px;top:6.9px;font-size:5.81px;line-height:5.81px;letter-spacing:0.000px;color:#222;font-weight:700;transform:scaleX(0.7880);transform-origin:0.39px 0;">Lightbox</div><div class="t" style="left:183.1px;top:6.8px;font-size:4.07px;line-height:4.07px;letter-spacing:-0.131px;color:#777;">Products     Solutions     Pricing     Resources</div><div class="t" style="left:33.7px;top:25.1px;font-size:8.72px;line-height:8.72px;letter-spacing:-0.289px;color:#2a2a2a;-webkit-text-stroke:0.3px #2a2a2a;">Maximizing Success:  A 12-Step</div><div class="t" style="left:34.0px;top:34.7px;font-size:8.72px;line-height:8.72px;letter-spacing:-0.239px;color:#2a2a2a;-webkit-text-stroke:0.3px #2a2a2a;">Guide for Agile Teams and</div><div class="t" style="left:34.0px;top:44.3px;font-size:8.72px;line-height:8.72px;letter-spacing:-0.271px;color:#2a2a2a;-webkit-text-stroke:0.3px #2a2a2a;">Sponsors to Stress Test Your Ideas</div><div class="t" style="left:186.8px;top:24.5px;font-size:5.81px;line-height:5.81px;letter-spacing:0.000px;color:#333;font-weight:700;transform:scaleX(0.8133);transform-origin:0.17px 0;">Speakers</div><div class="t" style="left:186.7px;top:35.6px;font-size:3.63px;line-height:3.63px;letter-spacing:-0.037px;color:#777;">Loading...</div><div class="t" style="left:186.9px;top:40.3px;font-size:4.36px;line-height:4.36px;letter-spacing:0.000px;color:#333;font-weight:700;transform:scaleX(0.8813);transform-origin:0.13px 0;">Share this webinar</div><div class="t" style="left:187.4px;top:48.3px;font-size:5.00px;line-height:5.00px;letter-spacing:0.000px;color:#444;font-weight:700;">f</div><div class="t" style="left:196.0px;top:48.3px;font-size:5.00px;line-height:5.00px;letter-spacing:0.000px;color:#444;font-weight:700;">in</div><div class="t" style="left:205.1px;top:48.3px;font-size:5.00px;line-height:5.00px;letter-spacing:0.000px;color:#444;font-weight:700;">X</div><div class="t" style="left:214.8px;top:48.3px;font-size:5.00px;line-height:5.00px;letter-spacing:0.000px;color:#444;font-weight:700;">∕</div><svg class="a" style="left:34.4px;top:59px;border-radius:3px 3px 0 0" width="130.4" height="40" viewBox="0 0 130.4 40"><rect width="130.4" height="40" fill="#3a3a37"/><rect x="1.5" y="35.2" width="2.3" height="8.3" fill="#9a8a70"/><rect x="10.6" y="1.8" width="2.5" height="4.2" fill="#4a5a48"/><rect x="7.1" y="10.1" width="2.3" height="8.4" fill="#b09a72"/><rect x="9.6" y="12.3" width="1.2" height="6.2" fill="#9a8a70"/><rect x="20.9" y="23.8" width="1.5" height="7.2" fill="#4a5a48"/><rect x="7.1" y="39.4" width="1.6" height="4.1" fill="#b09a72"/><rect x="9.6" y="36.4" width="1.7" height="7.1" fill="#5a5048"/><rect x="11.4" y="37.0" width="2.1" height="6.5" fill="#6a4a32"/><rect x="15.7" y="36.8" width="1.5" height="6.7" fill="#5a5048"/><rect x="19.3" y="38.7" width="2.6" height="4.8" fill="#6a4a32"/><rect x="25.5" y="1.0" width="2.4" height="5.0" fill="#b09a72"/><rect x="38.6" y="1.0" width="2.2" height="5.0" fill="#6a4a32"/><rect x="41.4" y="1.0" width="1.1" height="5.0" fill="#4a5a48"/><rect x="30.0" y="13.1" width="2.1" height="5.4" fill="#9a8a70"/><rect x="37.4" y="12.9" width="2.0" height="5.6" fill="#b09a72"/><rect x="40.2" y="14.0" width="2.0" height="4.5" fill="#c8b890"/><rect x="36.9" y="22.7" width="2.1" height="8.3" fill="#4a5a48"/><rect x="25.5" y="39.3" width="1.7" height="4.2" fill="#8a6a48"/><rect x="32.1" y="36.3" width="2.4" height="7.2" fill="#4a5a48"/><rect x="36.3" y="36.9" width="1.6" height="6.6" fill="#6a4a32"/><rect x="45.5" y="1.2" width="1.9" height="4.8" fill="#c8b890"/><rect x="61.7" y="1.0" width="1.5" height="5.0" fill="#8a6a48"/><rect x="65.4" y="1.0" width="1.2" height="5.0" fill="#8a6a48"/><rect x="72.6" y="1.4" width="1.9" height="4.6" fill="#9a8a70"/><rect x="75.6" y="1.0" width="1.4" height="5.0" fill="#5a5048"/><rect x="45.5" y="9.6" width="2.0" height="8.9" fill="#6a4a32"/><rect x="48.7" y="13.5" width="2.3" height="5.0" fill="#b09a72"/><rect x="52.1" y="13.1" width="2.3" height="5.4" fill="#4a5a48"/><rect x="58.7" y="13.1" width="1.9" height="5.4" fill="#4a5a48"/><rect x="61.2" y="12.9" width="1.8" height="5.6" fill="#c8b890"/><rect x="67.3" y="10.2" width="1.1" height="8.3" fill="#8a6a48"/><rect x="68.6" y="14.1" width="1.8" height="4.4" fill="#6a4a32"/><rect x="71.2" y="13.5" width="1.6" height="5.0" fill="#6a4a32"/><rect x="76.4" y="14.3" width="1.6" height="4.2" fill="#b09a72"/><rect x="52.8" y="25.8" width="2.5" height="5.2" fill="#8a6a48"/><rect x="56.5" y="25.9" width="2.1" height="5.1" fill="#c8b890"/><rect x="58.9" y="23.0" width="1.0" height="8.0" fill="#5a5048"/><rect x="60.5" y="23.3" width="1.7" height="7.7" fill="#4a5a48"/><rect x="64.2" y="23.3" width="1.8" height="7.7" fill="#8a6a48"/><rect x="69.7" y="26.1" width="1.1" height="4.9" fill="#c8b890"/><rect x="70.9" y="26.4" width="2.3" height="4.6" fill="#4a5a48"/><rect x="74.4" y="23.0" width="2.1" height="8.0" fill="#6a4a32"/><rect x="48.7" y="38.6" width="1.1" height="4.9" fill="#5a5048"/><rect x="59.5" y="34.6" width="2.5" height="8.9" fill="#b09a72"/><rect x="62.9" y="36.7" width="2.2" height="6.8" fill="#9a8a70"/><rect x="71.2" y="36.9" width="1.8" height="6.6" fill="#9a8a70"/><rect x="74.0" y="35.7" width="2.2" height="7.8" fill="#6a4a32"/><rect x="94.3" y="1.0" width="1.9" height="5.0" fill="#c8b890"/><rect x="96.5" y="1.0" width="2.0" height="5.0" fill="#5a5048"/><rect x="84.7" y="10.6" width="2.6" height="7.9" fill="#c8b890"/><rect x="94.5" y="10.6" width="1.3" height="7.9" fill="#b09a72"/><rect x="82.2" y="25.4" width="2.5" height="5.6" fill="#8a6a48"/><rect x="85.6" y="25.7" width="2.2" height="5.3" fill="#8a6a48"/><rect x="89.8" y="23.6" width="1.1" height="7.4" fill="#9a8a70"/><rect x="90.9" y="26.6" width="1.5" height="4.4" fill="#c8b890"/><rect x="93.8" y="24.3" width="2.2" height="6.7" fill="#b09a72"/><rect x="84.8" y="37.7" width="2.5" height="5.8" fill="#4a5a48"/><rect x="92.5" y="36.1" width="2.3" height="7.4" fill="#6a4a32"/><rect x="96.0" y="39.2" width="1.2" height="4.3" fill="#6a4a32"/><rect x="105.1" y="1.0" width="2.2" height="5.0" fill="#6a4a32"/><rect x="115.9" y="1.5" width="1.5" height="4.5" fill="#8a6a48"/><rect x="104.2" y="10.1" width="1.2" height="8.4" fill="#8a6a48"/><rect x="105.5" y="11.9" width="1.8" height="6.6" fill="#4a5a48"/><rect x="109.2" y="10.6" width="2.5" height="7.9" fill="#4a5a48"/><rect x="112.5" y="11.5" width="2.4" height="7.0" fill="#6a4a32"/><rect x="110.7" y="26.0" width="1.9" height="5.0" fill="#b09a72"/><rect x="113.2" y="24.8" width="2.3" height="6.2" fill="#4a5a48"/><rect x="116.3" y="25.5" width="2.2" height="5.5" fill="#5a5048"/><rect x="105.3" y="35.9" width="2.1" height="7.6" fill="#b09a72"/><rect x="110.7" y="35.6" width="1.8" height="7.9" fill="#b09a72"/><rect x="117.4" y="35.0" width="1.1" height="8.5" fill="#9a8a70"/><rect x="123.9" y="1.0" width="1.6" height="5.0" fill="#8a6a48"/><rect x="125.5" y="1.0" width="1.5" height="5.0" fill="#6a4a32"/><rect x="124.3" y="22.8" width="1.2" height="8.2" fill="#8a6a48"/><rect x="127.0" y="24.3" width="1.6" height="6.7" fill="#8a6a48"/><rect x="121.5" y="37.2" width="2.0" height="6.3" fill="#c8b890"/><rect x="125.1" y="35.9" width="1.7" height="7.6" fill="#8a6a48"/><rect x="4.1" y="0" width="3" height="40" fill="#6a6a66"/><rect x="22.5" y="0" width="3" height="40" fill="#6a6a66"/><rect x="42.5" y="0" width="3" height="40" fill="#6a6a66"/><rect x="79.2" y="0" width="3" height="40" fill="#6a6a66"/><rect x="98.5" y="0" width="3" height="40" fill="#6a6a66"/><rect x="118.5" y="0" width="3" height="40" fill="#6a6a66"/><rect x="0" y="6" width="130.4" height="2" fill="#6a6a66"/><rect x="0" y="18.5" width="130.4" height="2" fill="#6a6a66"/><rect x="0" y="31" width="130.4" height="2" fill="#6a6a66"/><rect x="0" y="43.5" width="130.4" height="2" fill="#6a6a66"/><ellipse cx="67.0" cy="27.7" rx="14.0" ry="18.9" fill="#cfa890"/><path d="M52.7 18.6 Q51.6 2 67.0 2 Q82.4 2 81.3 18.6 Q67.0 10.9 52.7 18.6 Z" fill="#2a1e16"/></svg></div>
<div class="th" style="left:1912px;top:1529px;width:300px;height:200px;border-color:#b8c6d9;"><div class="a" style="left:0px;top:0px;width:296px;height:196px;background:#22222e;"></div><div class="t" style="left:24.3px;top:4.7px;font-size:7.99px;line-height:7.99px;letter-spacing:0.000px;color:#eee;font-weight:700;font-family:'Liberation Serif',serif;transform:scaleX(1.4925);transform-origin:0.27px 0;">converge</div><div class="t" style="left:158.3px;top:6.6px;font-size:4.07px;line-height:4.07px;letter-spacing:0.005px;color:#ddd;">In Person      Virtual      Converge 2025</div><div class="a" style="left:240px;top:4px;width:31px;height:8.5px;background:#6b4ef6;border-radius:5px;"></div><div class="t" style="left:24.3px;top:40.4px;font-size:14.53px;line-height:14.53px;letter-spacing:0.000px;color:#d8d8e0;transform:scaleX(0.8874);transform-origin:0.33px 0;">The GTX Approach</div><div class="t" style="left:24.0px;top:54.7px;font-size:14.53px;line-height:14.53px;letter-spacing:0.000px;color:#d8d8e0;transform:scaleX(0.8965);transform-origin:0.61px 0;">on  Data Analytics</div><div class="t" style="left:24.4px;top:76.3px;font-size:5.52px;line-height:5.52px;letter-spacing:0.000px;color:#ccc;font-weight:700;transform:scaleX(0.7740);transform-origin:0.23px 0;">Converge LP Template</div><div class="a" style="left:183.6px;top:17px;width:87.4px;height:30px;background:#ec7353;"></div><div class="a" style="left:186.7px;top:20px;width:23px;height:24px;background:#22222e;border-radius:50%;"></div><div class="a" style="left:155px;top:47px;width:28.6px;height:30px;background:#6b4ef6;"></div><div class="t" style="left:156.7px;top:55.0px;font-size:18.90px;line-height:18.90px;letter-spacing:0.000px;color:#22222e;font-family:'Liberation Mono',monospace;transform:scaleX(1.1414);transform-origin:1.33px 0;">25</div><div class="a" style="left:213px;top:47px;width:30px;height:30px;background:#f5c957;"></div><div class="a" style="left:219px;top:53px;width:18px;height:18px;border:1px solid #fff3cc;border-radius:50%;"></div><div class="a" style="left:183.6px;top:77px;width:29.4px;height:20px;background:#9fd6d0;"></div><svg class="a" style="left:186px;top:77px" width="24" height="20" viewBox="0 0 24 20"><path d="M12 0 L24 16 L0 16 Z" fill="#22222e"/></svg><div class="a" style="left:243px;top:77px;width:28px;height:20px;background:#6b4ef6;"></div><div class="a" style="left:250px;top:82px;width:13px;height:13px;background:#f3ead6;border-radius:50%;"></div></div>
<div class="th" style="left:2260px;top:1529px;width:300px;height:200px;border-color:#b8c6d9;"><div class="a" style="left:34.3px;top:6.4px;width:5.6px;height:5.6px;background:#111;border-radius:50%;"></div><div class="t" style="left:40.6px;top:6.9px;font-size:5.81px;line-height:5.81px;letter-spacing:0.000px;color:#222;font-weight:700;transform:scaleX(0.7880);transform-origin:0.39px 0;">Lightbox</div><div class="t" style="left:182.7px;top:6.8px;font-size:4.07px;line-height:4.07px;letter-spacing:-0.121px;color:#777;">Products     Solutions     Pricing     Resources</div><div class="t" style="left:33.6px;top:25.1px;font-size:8.72px;line-height:8.72px;letter-spacing:-0.271px;color:#2a2a2a;-webkit-text-stroke:0.3px #2a2a2a;">Maximizing Success:  A 12-Step Guide for Agile Teams and</div><div class="t" style="left:33.9px;top:34.8px;font-size:8.72px;line-height:8.72px;letter-spacing:-0.271px;color:#2a2a2a;-webkit-text-stroke:0.3px #2a2a2a;">Sponsors to Stress Test Your Ideas</div><div class="t" style="left:34.0px;top:47.2px;font-size:3.34px;line-height:3.34px;letter-spacing:0.000px;color:#777;transform:scaleX(0.7889);transform-origin:0.27px 0;">Loading</div><svg class="a" style="left:34.3px;top:56px;border-radius:3px 3px 0 0" width="226.7" height="40" viewBox="0 0 226.7 40"><rect width="226.7" height="40" fill="#3a3a37"/><rect x="9.8" y="1.0" width="1.0" height="5.0" fill="#b09a72"/><rect x="12.8" y="1.0" width="1.2" height="5.0" fill="#b09a72"/><rect x="18.7" y="1.0" width="2.2" height="5.0" fill="#5a5048"/><rect x="28.5" y="1.0" width="2.1" height="5.0" fill="#9a8a70"/><rect x="32.7" y="1.2" width="1.6" height="4.8" fill="#c8b890"/><rect x="34.7" y="1.0" width="1.1" height="5.0" fill="#5a5048"/><rect x="37.1" y="1.0" width="2.1" height="5.0" fill="#6a4a32"/><rect x="40.3" y="1.1" width="1.5" height="4.9" fill="#9a8a70"/><rect x="14.2" y="9.8" width="1.2" height="8.7" fill="#4a5a48"/><rect x="22.3" y="13.5" width="2.4" height="5.0" fill="#8a6a48"/><rect x="25.8" y="9.9" width="1.6" height="8.6" fill="#6a4a32"/><rect x="28.6" y="10.5" width="1.5" height="8.0" fill="#b09a72"/><rect x="31.5" y="13.7" width="2.2" height="4.8" fill="#c8b890"/><rect x="40.4" y="9.6" width="1.7" height="8.9" fill="#8a6a48"/><rect x="1.5" y="26.3" width="2.3" height="4.7" fill="#b09a72"/><rect x="9.6" y="26.7" width="1.2" height="4.3" fill="#b09a72"/><rect x="17.7" y="25.5" width="2.1" height="5.5" fill="#6a4a32"/><rect x="20.7" y="22.2" width="1.2" height="8.8" fill="#5a5048"/><rect x="23.3" y="24.5" width="1.8" height="6.5" fill="#8a6a48"/><rect x="28.3" y="23.7" width="2.3" height="7.3" fill="#5a5048"/><rect x="40.6" y="23.1" width="1.5" height="7.9" fill="#5a5048"/><rect x="1.5" y="36.3" width="1.4" height="7.2" fill="#5a5048"/><rect x="7.9" y="38.6" width="2.3" height="4.9" fill="#4a5a48"/><rect x="12.1" y="36.9" width="1.7" height="6.6" fill="#6a4a32"/><rect x="21.7" y="34.8" width="2.2" height="8.7" fill="#4a5a48"/><rect x="25.0" y="35.6" width="2.5" height="7.9" fill="#5a5048"/><rect x="28.9" y="36.6" width="2.2" height="6.9" fill="#b09a72"/><rect x="39.9" y="39.3" width="2.2" height="4.2" fill="#5a5048"/><rect x="49.4" y="1.0" width="1.6" height="5.0" fill="#c8b890"/><rect x="55.6" y="1.0" width="1.5" height="5.0" fill="#5a5048"/><rect x="48.3" y="12.0" width="1.6" height="6.5" fill="#b09a72"/><rect x="50.9" y="9.9" width="2.1" height="8.6" fill="#4a5a48"/><rect x="56.9" y="12.0" width="1.7" height="6.5" fill="#6a4a32"/><rect x="59.2" y="9.7" width="1.8" height="8.8" fill="#5a5048"/><rect x="61.5" y="14.4" width="1.1" height="4.1" fill="#c8b890"/><rect x="66.9" y="10.9" width="1.4" height="7.6" fill="#b09a72"/><rect x="45.1" y="24.3" width="1.0" height="6.7" fill="#6a4a32"/><rect x="52.2" y="23.6" width="1.1" height="7.4" fill="#c8b890"/><rect x="53.5" y="23.1" width="2.1" height="7.9" fill="#c8b890"/><rect x="72.9" y="22.6" width="1.2" height="8.4" fill="#5a5048"/><rect x="45.1" y="35.4" width="1.9" height="8.1" fill="#5a5048"/><rect x="50.2" y="37.4" width="2.1" height="6.1" fill="#9a8a70"/><rect x="52.4" y="35.3" width="1.6" height="8.2" fill="#8a6a48"/><rect x="58.2" y="38.8" width="1.2" height="4.7" fill="#c8b890"/><rect x="60.7" y="38.4" width="1.7" height="5.1" fill="#5a5048"/><rect x="66.3" y="35.1" width="1.9" height="8.4" fill="#c8b890"/><rect x="68.5" y="37.1" width="1.7" height="6.4" fill="#5a5048"/><rect x="80.8" y="1.0" width="1.4" height="5.0" fill="#b09a72"/><rect x="83.8" y="1.0" width="1.8" height="5.0" fill="#b09a72"/><rect x="86.6" y="1.0" width="1.6" height="5.0" fill="#8a6a48"/><rect x="88.4" y="1.0" width="2.1" height="5.0" fill="#8a6a48"/><rect x="91.5" y="1.5" width="1.6" height="4.5" fill="#6a4a32"/><rect x="94.3" y="1.2" width="1.9" height="4.8" fill="#4a5a48"/><rect x="98.2" y="1.6" width="2.1" height="4.4" fill="#8a6a48"/><rect x="102.3" y="1.0" width="1.8" height="5.0" fill="#9a8a70"/><rect x="104.9" y="1.0" width="1.4" height="5.0" fill="#5a5048"/><rect x="114.0" y="1.0" width="1.6" height="5.0" fill="#5a5048"/><rect x="116.0" y="1.0" width="1.1" height="5.0" fill="#b09a72"/><rect x="117.2" y="1.0" width="2.4" height="5.0" fill="#4a5a48"/><rect x="124.0" y="1.2" width="1.5" height="4.8" fill="#b09a72"/><rect x="125.9" y="1.2" width="1.6" height="4.8" fill="#c8b890"/><rect x="128.1" y="1.0" width="1.4" height="5.0" fill="#6a4a32"/><rect x="129.6" y="1.0" width="2.4" height="5.0" fill="#4a5a48"/><rect x="137.2" y="1.0" width="2.5" height="5.0" fill="#9a8a70"/><rect x="86.7" y="13.1" width="2.1" height="5.4" fill="#6a4a32"/><rect x="90.4" y="13.6" width="2.1" height="4.9" fill="#b09a72"/><rect x="95.7" y="10.6" width="1.4" height="7.9" fill="#c8b890"/><rect x="101.2" y="10.9" width="1.8" height="7.6" fill="#8a6a48"/><rect x="103.6" y="14.2" width="2.3" height="4.3" fill="#c8b890"/><rect x="106.4" y="14.3" width="1.1" height="4.2" fill="#8a6a48"/><rect x="113.0" y="12.0" width="2.5" height="6.5" fill="#9a8a70"/><rect x="116.4" y="10.5" width="1.9" height="8.0" fill="#6a4a32"/><rect x="118.4" y="10.2" width="2.6" height="8.3" fill="#8a6a48"/><rect x="123.6" y="13.8" width="1.9" height="4.7" fill="#9a8a70"/><rect x="134.9" y="14.1" width="1.6" height="4.4" fill="#5a5048"/><rect x="137.1" y="11.2" width="1.1" height="7.3" fill="#5a5048"/><rect x="138.9" y="13.5" width="1.8" height="5.0" fill="#9a8a70"/><rect x="78.1" y="23.2" width="1.6" height="7.8" fill="#c8b890"/><rect x="80.5" y="23.7" width="2.2" height="7.3" fill="#6a4a32"/><rect x="84.4" y="23.6" width="1.9" height="7.4" fill="#4a5a48"/><rect x="88.1" y="25.7" width="1.0" height="5.3" fill="#c8b890"/><rect x="90.9" y="25.5" width="1.6" height="5.5" fill="#8a6a48"/><rect x="92.8" y="26.7" width="1.8" height="4.3" fill="#8a6a48"/><rect x="96.3" y="22.2" width="1.9" height="8.8" fill="#8a6a48"/><rect x="100.0" y="26.9" width="1.7" height="4.1" fill="#5a5048"/><rect x="102.8" y="26.9" width="1.2" height="4.1" fill="#6a4a32"/><rect x="107.9" y="26.3" width="1.8" height="4.7" fill="#9a8a70"/><rect x="111.4" y="25.4" width="1.7" height="5.6" fill="#6a4a32"/><rect x="115.1" y="26.8" width="1.7" height="4.2" fill="#c8b890"/><rect x="118.3" y="24.0" width="1.3" height="7.0" fill="#c8b890"/><rect x="119.8" y="26.0" width="2.3" height="5.0" fill="#8a6a48"/><rect x="122.1" y="22.6" width="2.5" height="8.4" fill="#9a8a70"/><rect x="125.4" y="25.5" width="1.3" height="5.5" fill="#b09a72"/><rect x="134.7" y="25.0" width="2.5" height="6.0" fill="#c8b890"/><rect x="137.5" y="26.5" width="2.3" height="4.5" fill="#8a6a48"/><rect x="78.1" y="35.5" width="2.2" height="8.0" fill="#b09a72"/><rect x="82.0" y="36.4" width="1.8" height="7.1" fill="#5a5048"/><rect x="85.5" y="36.5" width="1.6" height="7.0" fill="#5a5048"/><rect x="88.5" y="39.4" width="2.3" height="4.1" fill="#9a8a70"/><rect x="91.4" y="36.0" width="1.6" height="7.5" fill="#9a8a70"/><rect x="98.4" y="35.5" width="1.9" height="8.0" fill="#b09a72"/><rect x="104.2" y="35.6" width="1.5" height="7.9" fill="#8a6a48"/><rect x="110.2" y="38.3" width="2.5" height="5.2" fill="#9a8a70"/><rect x="121.3" y="34.6" width="1.1" height="8.9" fill="#6a4a32"/><rect x="123.7" y="37.6" width="1.6" height="5.9" fill="#c8b890"/><rect x="126.9" y="36.4" width="1.8" height="7.1" fill="#9a8a70"/><rect x="132.0" y="38.4" width="2.1" height="5.1" fill="#8a6a48"/><rect x="144.1" y="1.0" width="1.4" height="5.0" fill="#5a5048"/><rect x="146.9" y="1.0" width="1.9" height="5.0" fill="#b09a72"/><rect x="149.9" y="1.6" width="2.4" height="4.4" fill="#6a4a32"/><rect x="154.3" y="1.4" width="1.5" height="4.6" fill="#b09a72"/><rect x="157.1" y="1.0" width="2.0" height="5.0" fill="#b09a72"/><rect x="159.3" y="1.7" width="2.3" height="4.3" fill="#8a6a48"/><rect x="144.1" y="11.1" width="1.8" height="7.4" fill="#b09a72"/><rect x="146.1" y="14.0" width="1.5" height="4.5" fill="#4a5a48"/><rect x="159.7" y="12.9" width="1.2" height="5.6" fill="#b09a72"/><rect x="170.9" y="9.7" width="1.2" height="8.8" fill="#c8b890"/><rect x="146.8" y="22.0" width="1.5" height="9.0" fill="#c8b890"/><rect x="149.9" y="25.5" width="1.3" height="5.5" fill="#b09a72"/><rect x="155.7" y="26.7" width="1.5" height="4.3" fill="#4a5a48"/><rect x="160.1" y="24.2" width="2.2" height="6.8" fill="#8a6a48"/><rect x="166.4" y="22.9" width="1.4" height="8.1" fill="#b09a72"/><rect x="167.8" y="26.9" width="2.2" height="4.1" fill="#8a6a48"/><rect x="144.1" y="37.3" width="2.6" height="6.2" fill="#4a5a48"/><rect x="147.7" y="36.1" width="1.1" height="7.4" fill="#4a5a48"/><rect x="149.9" y="37.0" width="1.1" height="6.5" fill="#4a5a48"/><rect x="156.8" y="35.7" width="1.9" height="7.8" fill="#c8b890"/><rect x="167.3" y="38.5" width="2.4" height="5.0" fill="#4a5a48"/><rect x="171.6" y="37.4" width="1.1" height="6.1" fill="#c8b890"/><rect x="175.8" y="1.0" width="1.8" height="5.0" fill="#9a8a70"/><rect x="179.2" y="1.0" width="2.2" height="5.0" fill="#9a8a70"/><rect x="183.4" y="1.0" width="2.4" height="5.0" fill="#8a6a48"/><rect x="186.9" y="1.0" width="1.5" height="5.0" fill="#c8b890"/><rect x="190.5" y="1.0" width="2.5" height="5.0" fill="#b09a72"/><rect x="195.1" y="1.0" width="1.3" height="5.0" fill="#9a8a70"/><rect x="197.1" y="1.0" width="1.2" height="5.0" fill="#6a4a32"/><rect x="201.7" y="1.9" width="1.9" height="4.1" fill="#5a5048"/><rect x="175.8" y="12.0" width="1.0" height="6.5" fill="#b09a72"/><rect x="178.2" y="13.3" width="2.3" height="5.2" fill="#5a5048"/><rect x="185.6" y="9.9" width="1.7" height="8.6" fill="#8a6a48"/><rect x="204.0" y="11.7" width="1.6" height="6.8" fill="#5a5048"/><rect x="177.1" y="25.7" width="2.4" height="5.3" fill="#6a4a32"/><rect x="186.2" y="24.0" width="2.0" height="7.0" fill="#6a4a32"/><rect x="196.5" y="22.9" width="1.2" height="8.1" fill="#9a8a70"/><rect x="198.8" y="24.9" width="2.4" height="6.1" fill="#5a5048"/><rect x="202.1" y="25.9" width="1.8" height="5.1" fill="#5a5048"/><rect x="175.8" y="36.5" width="1.2" height="7.0" fill="#9a8a70"/><rect x="177.1" y="35.0" width="2.1" height="8.5" fill="#5a5048"/><rect x="185.5" y="37.9" width="1.5" height="5.6" fill="#4a5a48"/><rect x="188.5" y="38.4" width="1.8" height="5.1" fill="#9a8a70"/><rect x="190.8" y="38.7" width="2.5" height="4.8" fill="#8a6a48"/><rect x="195.5" y="36.2" width="2.0" height="7.3" fill="#5a5048"/><rect x="197.9" y="37.0" width="1.2" height="6.5" fill="#9a8a70"/><rect x="201.2" y="38.2" width="1.6" height="5.3" fill="#c8b890"/><rect x="208.8" y="1.0" width="2.1" height="5.0" fill="#4a5a48"/><rect x="211.5" y="1.0" width="2.0" height="5.0" fill="#c8b890"/><rect x="218.3" y="1.4" width="2.5" height="4.6" fill="#4a5a48"/><rect x="221.1" y="1.0" width="2.4" height="5.0" fill="#4a5a48"/><rect x="223.6" y="1.0" width="1.6" height="5.0" fill="#9a8a70"/><rect x="211.9" y="12.4" width="1.5" height="6.1" fill="#6a4a32"/><rect x="215.3" y="14.3" width="1.1" height="4.2" fill="#b09a72"/><rect x="219.7" y="14.4" width="1.7" height="4.1" fill="#c8b890"/><rect x="222.7" y="12.9" width="1.5" height="5.6" fill="#5a5048"/><rect x="208.8" y="23.2" width="1.1" height="7.8" fill="#b09a72"/><rect x="210.2" y="24.3" width="1.9" height="6.7" fill="#9a8a70"/><rect x="216.6" y="22.1" width="1.7" height="8.9" fill="#5a5048"/><rect x="218.6" y="25.4" width="2.1" height="5.6" fill="#b09a72"/><rect x="222.4" y="22.7" width="1.8" height="8.3" fill="#8a6a48"/><rect x="212.0" y="35.8" width="2.0" height="7.7" fill="#b09a72"/><rect x="217.7" y="34.7" width="1.2" height="8.8" fill="#9a8a70"/><rect x="220.6" y="38.7" width="1.7" height="4.8" fill="#b09a72"/><rect x="42.1" y="0" width="3" height="40" fill="#6a6a66"/><rect x="75.1" y="0" width="3" height="40" fill="#6a6a66"/><rect x="141.1" y="0" width="3" height="40" fill="#6a6a66"/><rect x="172.8" y="0" width="3" height="40" fill="#6a6a66"/><rect x="205.8" y="0" width="3" height="40" fill="#6a6a66"/><rect x="0" y="6" width="226.7" height="2" fill="#6a6a66"/><rect x="0" y="18.5" width="226.7" height="2" fill="#6a6a66"/><rect x="0" y="31" width="226.7" height="2" fill="#6a6a66"/><rect x="0" y="43.5" width="226.7" height="2" fill="#6a6a66"/><ellipse cx="118.0" cy="48.6" rx="21.0" ry="28.4" fill="#cfa890"/><path d="M96.6 34.9 Q94.9 12 118.0 12 Q141.1 12 139.4 34.9 Q118.0 23.4 96.6 34.9 Z" fill="#2a1e16"/></svg></div>
<div class="th" style="left:2608px;top:1529px;width:300px;height:200px;border-color:#b8c6d9;"><div class="a" style="left:0px;top:0px;width:296px;height:196px;background:#0f2c38;"></div><svg class="a" style="left:0px;top:0px" width="296" height="196" viewBox="0 0 296 196"><path d="M0 20 Q60 60 120 30 T296 40 V70 Q200 90 120 60 T0 50 Z" fill="#133744"/></svg><div class="a" style="left:9px;top:1.5px;width:11px;height:11px;border:1.3px solid #c8e04a;border-radius:50%;"></div><div class="t" style="left:104.5px;top:5.6px;font-size:4.07px;line-height:4.07px;letter-spacing:0.000px;color:#ddd;transform:scaleX(1.1644);transform-origin:0.33px 0;">Home      Speakers</div><div class="a" style="left:238px;top:3px;width:26.5px;height:8px;background:#d4f03a;border-radius:1px;"></div><div class="t" style="left:65.4px;top:36.6px;font-size:6.98px;line-height:6.98px;letter-spacing:0.255px;color:#d4f03a;font-family:'Liberation Serif',serif;font-style:italic;">A 3-day in-person user conference that helps you level</div><div class="t" style="left:144.7px;top:48.1px;font-size:5.81px;line-height:5.81px;letter-spacing:0.000px;color:#d4f03a;font-family:'Liberation Serif',serif;font-style:italic;transform:scaleX(1.4958);transform-origin:0.29px 0;">up</div><div class="a" style="left:138px;top:79px;width:70px;height:11px;background:#fff;border-radius:2px;transform:rotate(4deg);"><div class="t" style="left:2.5px;top:1.8px;font-size:6px;line-height:8px;font-weight:700;color:#222;transform:scaleX(0.88);transform-origin:0 0;">Oct' 2026 · Lake Placid, NY</div></div><svg class="a" style="left:87.6px;top:70.4px" width="47" height="47" viewBox="0 0 47 47"><g stroke="#5fd3a8" stroke-width="1.6" fill="none"><circle cx="23.1" cy="23.1" r="22.3"/><path d="M12 10 L21 22 M34 10 L25 22 M20 9 V22 M26 9 V22 M12 24 H34"/></g></svg></div>
<div class="a" style="left:623px;top:400px;width:386px;height:246px;background:#fff;border:2px solid #e2e2e2;border-radius:12px;box-shadow:0 12px 28px rgba(0,0,0,0.14);overflow:hidden;"></div>
<div class="a" style="left:625px;top:410px;width:382px;height:76px;background:#7b40e8;"></div>
<div class="t" style="left:647.9px;top:434.1px;font-size:27.62px;line-height:27.62px;letter-spacing:1.121px;color:#fff;">All page types</div>
<div class="t" style="left:646.7px;top:509.6px;font-size:27.62px;line-height:27.62px;letter-spacing:0.999px;color:#222;">Registration pages</div>
<div class="t" style="left:647.7px;top:585.4px;font-size:27.62px;line-height:27.62px;letter-spacing:1.754px;color:#222;">On-demand pages</div>
<svg class="a" style="left:2752px;top:1490px;" width="100" height="100" viewBox="0 0 100 100"><defs><linearGradient id="cg" x1="0.15" y1="0.1" x2="0.85" y2="0.9"><stop offset="0" stop-color="#bb8ee9"/><stop offset="1" stop-color="#7c48d5"/></linearGradient></defs><circle cx="49.85" cy="50" r="44.85" fill="#561bc8"/><circle cx="49.85" cy="50" r="27.3" fill="url(#cg)"/><path d="M29.5 68.3 A27.3 27.3 0 0 0 70.2 68.3" fill="none" stroke="#d8c8f2" stroke-width="0.8"/><path d="M34 35 H56 Q63.5 35 63.5 42.5 Q63.5 46.5 60 48.8 L46.3 58.7 H64 V67 H42 Q34.7 67 34.7 60 Q34.7 56.5 38.5 54 L52 42.1 H34 Z" fill="#fff"/></svg>
</body></html>
